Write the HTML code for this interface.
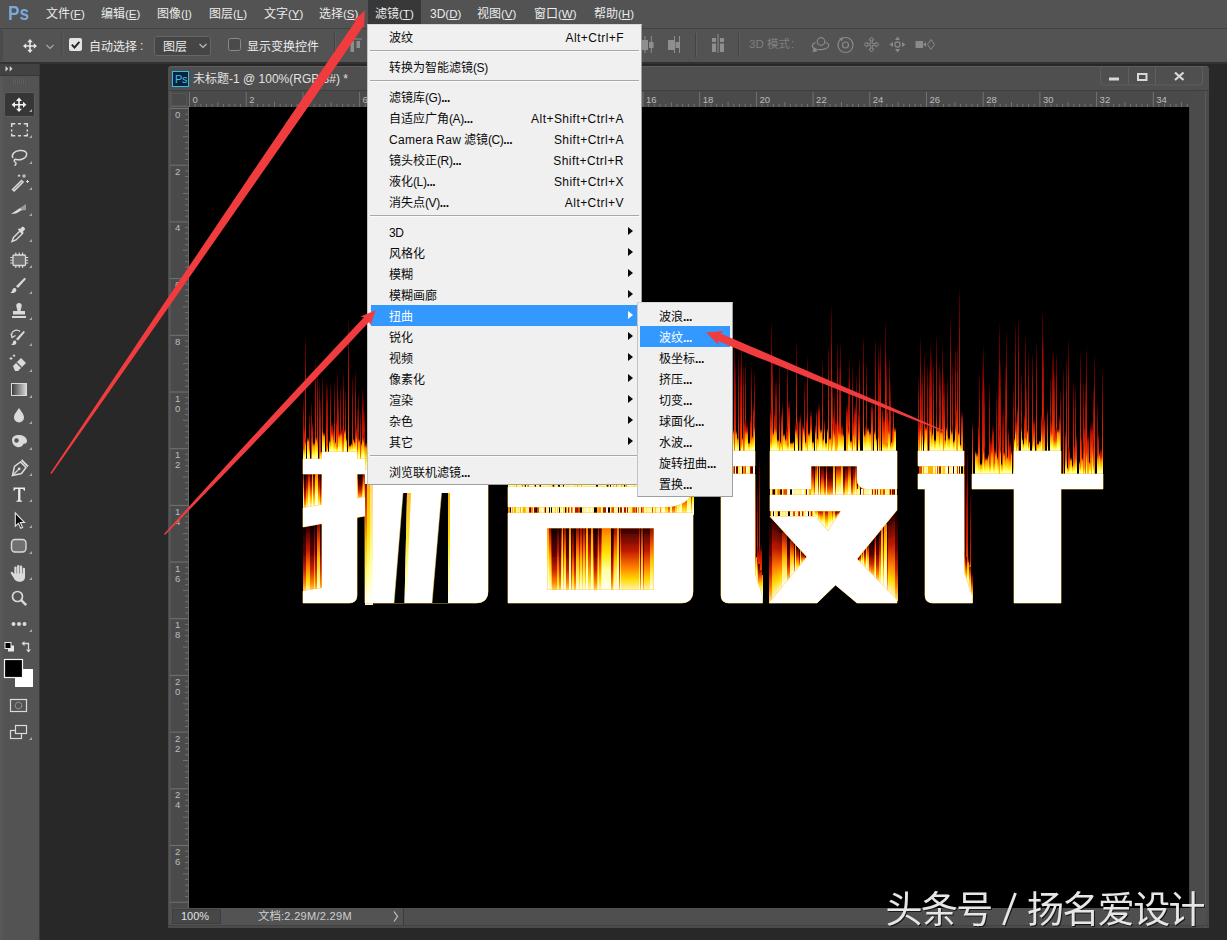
<!DOCTYPE html>
<html lang="zh-CN"><head><meta charset="utf-8"><title>Photoshop - 滤镜 &gt; 扭曲 &gt; 波纹</title>
<style>
html,body{margin:0;padding:0}
body{width:1227px;height:940px;overflow:hidden;position:relative;background:#282828;
 font-family:"Liberation Sans","Noto Sans CJK SC",sans-serif;font-size:12px;color:#ddd}
div{position:absolute;box-sizing:border-box}
.t{white-space:nowrap}
.cj{letter-spacing:0}
svg.abs{position:absolute;left:0;top:0}

.menu{background:#f0f0f0;border:1px solid #a0a0a0;border-top-color:#d8d8d8;border-left-color:#c4c4c4;color:#000;font-size:12px}
.mi{left:0;height:21px;line-height:21px;white-space:nowrap;color:#0a0a0a}
.mi .l{left:20px;top:1.5px;position:absolute}
.mi .la{letter-spacing:-.4px}
.mi .r{right:17px;top:1.5px;position:absolute;letter-spacing:.45px}
.mi.hl{background:#3399ff;color:#fff}
.sep{height:1px;background:#a8a8a8;border-bottom:1px solid #fbfbfb;box-sizing:content-box}
.arr{width:0;height:0;border-left:5.5px solid #0a0a0a;border-top:4px solid transparent;border-bottom:4px solid transparent}
.hl .arr{border-left-color:#fff}
</style></head>
<body>
<div style="left:0px;top:0px;width:1227px;height:28px;background:#535353"></div>
<div style="left:0px;top:28px;width:1227px;height:1px;background:#414141"></div>
<div class="t" style="left:8px;top:0px;font-size:21px;line-height:26px;font-weight:bold;color:#7ba7d9;transform:scaleX(.82);transform-origin:0 0">Ps</div>
<div style="left:368px;top:0px;width:53px;height:24px;background:#383838"></div>
<div class="t mb" style="left:46px;top:6px;font-size:12px;line-height:16px;color:#ebebeb"><span class="cj">文件</span><span style="font-size:11.5px">(<u>F</u>)</span></div>
<div class="t mb" style="left:101px;top:6px;font-size:12px;line-height:16px;color:#ebebeb"><span class="cj">编辑</span><span style="font-size:11.5px">(<u>E</u>)</span></div>
<div class="t mb" style="left:157px;top:6px;font-size:12px;line-height:16px;color:#ebebeb"><span class="cj">图像</span><span style="font-size:11.5px">(<u>I</u>)</span></div>
<div class="t mb" style="left:209px;top:6px;font-size:12px;line-height:16px;color:#ebebeb"><span class="cj">图层</span><span style="font-size:11.5px">(<u>L</u>)</span></div>
<div class="t mb" style="left:264px;top:6px;font-size:12px;line-height:16px;color:#ebebeb"><span class="cj">文字</span><span style="font-size:11.5px">(<u>Y</u>)</span></div>
<div class="t mb" style="left:319px;top:6px;font-size:12px;line-height:16px;color:#ebebeb"><span class="cj">选择</span><span style="font-size:11.5px">(<u>S</u>)</span></div>
<div class="t mb" style="left:375px;top:6px;font-size:12px;line-height:16px;color:#ebebeb"><span class="cj">滤镜</span><span style="font-size:11.5px">(<u>T</u>)</span></div>
<div class="t mb" style="left:430px;top:6px;font-size:12px;line-height:16px;color:#ebebeb">3D<span style="font-size:11.5px">(<u>D</u>)</span></div>
<div class="t mb" style="left:477px;top:6px;font-size:12px;line-height:16px;color:#ebebeb"><span class="cj">视图</span><span style="font-size:11.5px">(<u>V</u>)</span></div>
<div class="t mb" style="left:534px;top:6px;font-size:12px;line-height:16px;color:#ebebeb"><span class="cj">窗口</span><span style="font-size:11.5px">(<u>W</u>)</span></div>
<div class="t mb" style="left:594px;top:6px;font-size:12px;line-height:16px;color:#ebebeb"><span class="cj">帮助</span><span style="font-size:11.5px">(<u>H</u>)</span></div>
<div style="left:0px;top:29px;width:1227px;height:33px;background:#535353"></div>
<div style="left:0px;top:62px;width:1227px;height:2px;background:#323232"></div>
<div style="left:0px;top:30px;width:3px;height:31px;background:#4a4a4a"></div>
<svg class="abs" width="1227" height="64" viewBox="0 0 1227 64"><g fill="#e6e6e6" stroke="none"><path d="M30 39l2.800 3.200h-2v3h3v-2l3.200 2.800-3.200 2.800v-2h-3v3h2l-2.800 3.200-2.800-3.200h2v-3h-3v2l-3.200-2.800 3.200-2.800v2h3v-3h-2z"/></g><path d="M46.5 45l3.500 3.500 3.500-3.500" fill="none" stroke="#a8a8a8" stroke-width="1.2"/><rect x="61.5" y="33" width="1" height="24" fill="#434343"/><rect x="62.5" y="33" width="1" height="24" fill="#5e5e5e"/><rect x="69" y="38" width="13" height="13" rx="2" fill="#e4e4e4"/><path d="M71.8 44.6l2.7 2.9 4.9-5.6" fill="none" stroke="#262626" stroke-width="1.9"/><rect x="154.5" y="36.5" width="56" height="19" rx="2" fill="#454545" stroke="#666" stroke-width="1"/><path d="M199.5 44l3.5 3.500 3.500-3.500" fill="none" stroke="#bdbdbd" stroke-width="1.2"/><rect x="228.5" y="38.5" width="12" height="12" rx="2" fill="#4a4a4a" stroke="#8a8a8a" stroke-width="1"/><rect x="334" y="33" width="1" height="24" fill="#434343"/><rect x="335" y="33" width="1" height="24" fill="#5e5e5e"/><g fill="#8e8e8e"><rect x="350" y="38.500" width="12" height="1"/><rect x="350.500" y="41" width="3.500" height="11"/><rect x="356.500" y="41" width="3.500" height="7"/><rect x="642" y="40" width="6" height="10"/><rect x="644.500" y="36" width="1" height="17"/><rect x="649" y="42" width="4.500" height="6"/><rect x="650.800" y="36" width="1" height="17"/><rect x="668" y="40" width="6" height="10"/><rect x="674" y="36" width="1" height="17"/><rect x="675.500" y="42" width="3.500" height="6"/><rect x="679" y="36" width="1" height="17"/><rect x="712" y="38" width="4" height="4"/><rect x="712" y="43.500" width="4" height="8.500"/><rect x="717.500" y="34" width="1" height="19"/><rect x="720" y="38" width="4" height="4"/><rect x="720" y="43.500" width="4" height="8.500"/></g><rect x="695" y="33" width="1" height="24" fill="#434343"/><rect x="696" y="33" width="1" height="24" fill="#5e5e5e"/><rect x="738" y="33" width="1" height="24" fill="#434343"/><rect x="739" y="33" width="1" height="24" fill="#5e5e5e"/><g fill="none" stroke="#8a8a8a" stroke-width="1.200"><circle cx="821" cy="41.500" r="3.800"/><path d="M815.500 42.500c-4 1.500-4.500 5 0 6.500s11 .5 13-2.500c1-1.800-.5-3.500-3-4"/><path d="M814 47l3.500 4.500-5 .5z" fill="#8a8a8a" stroke="none"/><circle cx="845.500" cy="45" r="7.500"/><circle cx="845.500" cy="45" r="3"/><path d="M839 38.500l4-1-1 4z" fill="#8a8a8a" stroke="none"/><path d="M871.500 37l2.500 3h-1.700v3.700h3.700v-1.700l3 2.500-3 2.500v-1.700h-3.700v3.700h1.700l-2.500 3-2.500-3h1.700v-3.700h-3.700v1.700l-3-2.500 3-2.500v1.700h3.700v-3.700h-1.700z" stroke-width="1"/><circle cx="897.500" cy="44.500" r="2.600"/><path d="M897.500 36.500l2.500 3.500h-5zM897.500 52.500l2.500-3.500h-5zM889.500 44.500l3.500-2.500v5zM905.500 44.500l-3.500-2.500v5z" fill="#8a8a8a" stroke="none"/><rect x="915.500" y="41" width="7.500" height="7" fill="#8a8a8a" stroke="none"/><path d="M923 44.500l3-2.500v5z" fill="#8a8a8a" stroke="none"/><path d="M927.500 44.500l3.500-5 3.500 5-3.500 5z" stroke-width="1"/></g></svg>
<div class="t" style="left:89px;top:38.5px;font-size:12px;line-height:16px;color:#ebebeb;letter-spacing:1.5px"><span class="cj">自动选择</span></div>
<div class="t" style="left:140px;top:38px;font-size:12px;line-height:16px;color:#ebebeb;">:</div>
<div class="t" style="left:163px;top:38.5px;font-size:12px;line-height:16px;color:#ebebeb;"><span class="cj">图层</span></div>
<div class="t" style="left:247px;top:38.5px;font-size:12px;line-height:16px;color:#ebebeb;"><span class="cj">显示变换控件</span></div>
<div class="t" style="left:749px;top:37px;font-size:11.5px;line-height:15.5px;color:#808080;">3D</div>
<div class="t" style="left:767px;top:37px;font-size:11.5px;line-height:15.5px;color:#808080;"><span class="cj">模式</span></div>
<div class="t" style="left:791px;top:36px;font-size:12px;line-height:16px;color:#808080;">:</div>
<div style="left:0px;top:64px;width:39px;height:876px;background:#535353"></div>
<div style="left:39px;top:64px;width:1px;height:876px;background:#3a3a3a"></div>
<div style="left:0px;top:64px;width:3px;height:876px;background:#585858"></div>
<div style="left:0px;top:64px;width:39px;height:11px;background:#424242"></div>
<div style="left:0px;top:75px;width:39px;height:1px;background:#383838"></div>
<div style="left:13px;top:79px;width:14px;height:5px;background:repeating-linear-gradient(90deg,#5f5f5f 0 1px,#4e4e4e 1px 2px)"></div>
<svg class="abs" width="40" height="940" viewBox="0 0 40 940"><rect x="4.500" y="92.500" width="30" height="24" rx="2" fill="#363636" stroke="#5c5c5c"/><path d="M5.500 66l2.800 2.700-2.800 2.700zM9.700 66l2.800 2.700-2.800 2.700z" fill="#d6d6d6"/><path d="M32 112h-3l3-3zM32 138h-3l3-3zM32 164h-3l3-3zM32 190h-3l3-3zM32 216h-3l3-3zM32 242h-3l3-3zM32 268h-3l3-3zM32 294h-3l3-3zM32 320h-3l3-3zM32 346h-3l3-3zM32 372h-3l3-3zM32 398h-3l3-3zM32 424h-3l3-3zM32 450h-3l3-3zM32 476h-3l3-3zM32 502h-3l3-3zM32 528h-3l3-3zM32 554h-3l3-3zM32 580h-3l3-3zM32 632h-3l3-3z" fill="#a9a9a9"/><path d="M19 97.500l3 3.400h-2.200v3.100h3.200v-2.200l3.400 3-3.400 3v-2.200h-3.200v3.100h2.200l-3 3.400-3-3.400h2.200v-3.100h-3.200v2.200l-3.400-3 3.400-3v2.200h3.200v-3.100h-2.200z" fill="#f2f2f2"/><path d="M11.700 127v-3.300h3.600M18 123.700h3M23.700 123.700h3.600v3.300M27.300 129.500v2M27.300 133.500v2.200h-3.600M21 135.700h-3M15.300 135.700h-3.600v-2.200M11.700 131.500v-2" fill="none" stroke="#dadada" stroke-width="1.500"/><path d="M13 158c-2-3 1-7 6.500-7.500s8 2 7 5-6 5-10 4c-2.500-.6-3 1.500-1.500 2.500s1.500 2.500-.5 3.500" fill="none" stroke="#dadada" stroke-width="1.500"/><path d="M11.500 189.500l10-10 2.600 2.600-10 10z" fill="#dadada"/><path d="M14 189.500l8-8" stroke="#535353" stroke-width=".8"/><path d="M24 174v4M22 176h4M27.500 180v3M26 181.500h3M19 174.500v2.500M17.800 175.700h2.500" stroke="#dadada" stroke-width="1"/><path d="M11 214l9-6 3 1.500-7 4z" fill="#dadada"/><path d="M20 208l6-4v6l-3 .5z" fill="#9a9a9a"/><path d="M12 241.500l1.500-4 6.500-6.500 2.500 2.500-6.500 6.500z" fill="none" stroke="#dadada" stroke-width="1.400"/><path d="M20 229l2-2c1.200-1.200 4 1.600 2.800 2.800l-2 2 .8.800-1.400 1.400-4.400-4.400 1.400-1.400z" fill="#dadada"/><rect x="13" y="255" width="12.500" height="10.500" rx="1" fill="#6e6e6e" stroke="#dadada" stroke-width="1.300"/><path d="M10.300 257.500h2.700M10.300 260.300h2.700M10.300 263h2.700M25.500 257.500h2.700M25.500 260.300h2.700M25.500 263h2.700M15.800 252.500v2.500M19.200 252.500v2.500M22.600 252.500v2.500M15.800 265.500v2.500M19.200 265.500v2.500M22.600 265.500v2.500" stroke="#dadada" stroke-width="1.100"/><path d="M26 279l-8 9-2-1.800 8.500-8.500z" fill="#dadada"/><path d="M16 288.500c1 1.500 0 4-2.500 4.500-1.500.3-2.500 0-3-.5 1.500-.5 1.500-1.500 2-3 .5-1.600 2.500-2 3.500-1z" fill="#dadada"/><path d="M16.500 307a2.800 2.800 0 1 1 5 0l-1 4h4.500v3.500h-12v-3.500h4.500z" fill="#dadada"/><rect x="12" y="316" width="14" height="2" fill="#dadada"/><path d="M25 332l-7 8.500-2-1.600 7.500-8z" fill="#dadada"/><path d="M16 341c1 1.500 0 3.500-2 4-1.300.3-2.300 0-2.800-.5 1.300-.4 1.300-1.300 1.800-2.600.5-1.400 2-1.700 3-.9z" fill="#dadada"/><path d="M12 337a5 5 0 0 1 8-5.500M11 333.500l1 4 3.500-2" fill="none" stroke="#dadada" stroke-width="1.200"/><path d="M13 366l8-8 5 5-8 8h-3z" fill="#dadada"/><path d="M16.500 362.500l5 5" stroke="#535353" stroke-width="1.200"/><path d="M11 357v3M9.500 358.500h3M14 354.500v2.500M12.800 355.700h2.500" stroke="#dadada" stroke-width="1"/><defs><linearGradient id="tgr" x1="0" x2="1"><stop offset="0" stop-color="#3a3a3a"/><stop offset="1" stop-color="#d8d8d8"/></linearGradient></defs><rect x="11.500" y="383.500" width="15" height="12" fill="url(#tgr)" stroke="#dadada" stroke-width="1"/><path d="M19 408c3 4.500 5 6.500 5 9.500a5 5 0 0 1-10 0c0-3 2-5 5-9.500z" fill="#dadada"/><path d="M12 440c0-4 4-5.500 8-5 4 .5 7 3 7 6 0 2-1.500 3-3 2.500l-2 2.500c-1 1-3 1.500-5 1-3-.8-5-3.500-5-7z" fill="#dadada"/><circle cx="16.500" cy="440.500" r="2.200" fill="#535353"/><path d="M12.500 475.500l2-9 6-4.500 5.500 5.500-4.500 6-9 2z" fill="none" stroke="#dadada" stroke-width="1.500"/><path d="M13 475l5.500-5.500" stroke="#dadada" stroke-width="1.200"/><circle cx="19.200" cy="468.800" r="1.400" fill="#dadada"/><path d="M21.500 460l6.500 6.500" stroke="#dadada" stroke-width="1.800"/><path d="M13.500 487.500h11.500v3.300h-1c-.2-1.300-.7-1.800-2-1.800h-1.600v10.400c0 .9.400 1.200 1.700 1.300v1h-5.700v-1c1.300-.1 1.700-.4 1.700-1.300v-10.400h-1.600c-1.300 0-1.800.5-2 1.800h-1z" fill="#ececec"/><path d="M15.300 512.800v13.400l3.100-2.900 2.300 5 1.900-.9-2.300-4.900h4.200z" fill="#0c0c0c" stroke="#e4e4e4" stroke-width="1.100"/><rect x="11.500" y="539.500" width="14.500" height="12.500" rx="3.500" fill="#707070" stroke="#dadada" stroke-width="1.400"/><g fill="#dadada"><rect x="14.300" y="566.500" width="2.300" height="9" rx="1.100"/><rect x="17.100" y="565" width="2.300" height="10" rx="1.100"/><rect x="19.900" y="565.600" width="2.300" height="10" rx="1.100"/><rect x="22.700" y="567.800" width="2.300" height="9" rx="1.100"/><path d="M14.300 573.500h10.700v3.500c0 3-2 4.800-5.500 4.800-3 0-4.500-1.300-5.800-3.800l-2.800-4.500c-.8-1.400.9-2.400 1.900-1.200l1.500 1.900z"/></g><circle cx="17.500" cy="596.500" r="5" fill="none" stroke="#dadada" stroke-width="1.700"/><path d="M21.200 600.200l5 5" stroke="#dadada" stroke-width="2.400"/><circle cx="13.500" cy="624" r="2" fill="#dadada"/><circle cx="19" cy="624" r="2" fill="#dadada"/><circle cx="24.500" cy="624" r="2" fill="#dadada"/><rect x="8" y="645.500" width="6" height="6" fill="#e8e8e8"/><rect x="5" y="642.500" width="6" height="6" fill="#000" stroke="#e8e8e8" stroke-width="1"/><path d="M24 643.500h4.500v6" fill="none" stroke="#dadada" stroke-width="1.300"/><path d="M21.500 643.500l3-2.500v5zM28.500 652.500l-2.500-3h5z" fill="#dadada"/><rect x="15.500" y="669.500" width="17" height="17" fill="#fff" stroke="#fff"/><rect x="4.500" y="659.500" width="18" height="18" fill="#000" stroke="#f4f4f4" stroke-width="1.200"/><rect x="10.500" y="699.500" width="16" height="12" fill="none" stroke="#dadada" stroke-width="1.200"/><circle cx="18.500" cy="705.500" r="3.300" fill="none" stroke="#dadada" stroke-width="1" stroke-dasharray="1 1"/><rect x="10.500" y="730.500" width="11" height="8" fill="#535353" stroke="#dadada" stroke-width="1.200"/><rect x="15.500" y="725.500" width="11" height="8" fill="#535353" stroke="#dadada" stroke-width="1.200"/><path d="M32 740h-3l3-3z" fill="#a9a9a9"/></svg>
<div style="left:168px;top:66px;width:1041px;height:862px;background:#4b4b4b;border-radius:4px 4px 0 0"></div>
<div style="left:168px;top:66px;width:1041px;height:24px;background:#4f4f4f;border-radius:4px 4px 0 0;border-top:1px solid #5e5e5e"></div>
<div style="left:168px;top:90px;width:1042px;height:1px;background:#3f3f3f"></div>
<div style="left:172px;top:71px;width:17px;height:16px;background:#06243b;border:1px solid #2fc0ea"></div>
<div class="t" style="left:175px;top:72px;font-size:11px;line-height:14px;color:#4cbdf0;letter-spacing:-0.3px">Ps</div>
<div class="t" style="left:193px;top:71px;font-size:12px;line-height:16px;color:#e2e2e2"><span class="cj">未标题</span>-1 @ 100%(RGB/8#) *</div>
<svg class="abs" width="1227" height="100" viewBox="0 0 1227 100"><rect x="1100.500" y="66.500" width="102" height="18.500" rx="3" fill="none" stroke="#5f5f5f"/><path d="M1128.500 67v18M1155.500 67v18" stroke="#5f5f5f"/><rect x="1109" y="77.500" width="10" height="3" fill="#d8d8d8"/><rect x="1138" y="74" width="8.500" height="6" fill="none" stroke="#d8d8d8" stroke-width="2"/><path d="M1175 72.500l8.500 7.500M1183.500 72.500l-8.500 7.500" stroke="#d8d8d8" stroke-width="2.300"/></svg>
<div style="left:1205px;top:91px;width:1px;height:837px;background:#5a5a5a"></div>
<div style="left:1189px;top:91px;width:1px;height:817px;background:#424242"></div>
<div style="left:169px;top:91px;width:1021px;height:16px;background:#4a4a4a"></div>
<div style="left:169px;top:91px;width:20px;height:817px;background:#4a4a4a"></div>
<div style="left:188px;top:107px;width:1px;height:801px;background:#686868"></div>
<div style="left:169px;top:106px;width:20px;height:1px;background:#626262"></div>
<div style="left:169px;top:91px;width:2px;height:817px;background:#555"></div>
<svg class="abs" width="1227" height="940" viewBox="0 0 1227 940"><rect x="171.500" y="93.500" width="15" height="12" fill="none" stroke="#606060" stroke-dasharray="1 1"/><path d="M189.5 92V107M195.2 104V107M200.8 104V107M206.5 104V107M212.2 104V107M217.8 102V107M223.5 104V107M229.2 104V107M234.9 104V107M240.5 104V107M246.2 92V107M251.9 104V107M257.5 104V107M263.2 104V107M268.9 104V107M274.5 102V107M280.2 104V107M285.9 104V107M291.5 104V107M297.2 104V107M302.9 92V107M308.6 104V107M314.2 104V107M319.9 104V107M325.6 104V107M331.2 102V107M336.9 104V107M342.6 104V107M348.2 104V107M353.9 104V107M359.6 92V107M365.2 104V107M370.9 104V107M376.6 104V107M382.3 104V107M387.9 102V107M393.6 104V107M399.3 104V107M404.9 104V107M410.6 104V107M416.3 92V107M421.9 104V107M427.6 104V107M433.3 104V107M438.9 104V107M444.6 102V107M450.3 104V107M456.0 104V107M461.6 104V107M467.3 104V107M473.0 92V107M478.6 104V107M484.3 104V107M490.0 104V107M495.6 104V107M501.3 102V107M507.0 104V107M512.7 104V107M518.3 104V107M524.0 104V107M529.7 92V107M535.3 104V107M541.0 104V107M546.7 104V107M552.3 104V107M558.0 102V107M563.7 104V107M569.3 104V107M575.0 104V107M580.7 104V107M586.4 92V107M592.0 104V107M597.7 104V107M603.4 104V107M609.0 104V107M614.7 102V107M620.4 104V107M626.0 104V107M631.7 104V107M637.4 104V107M643.0 92V107M648.7 104V107M654.4 104V107M660.1 104V107M665.7 104V107M671.4 102V107M677.1 104V107M682.7 104V107M688.4 104V107M694.1 104V107M699.7 92V107M705.4 104V107M711.1 104V107M716.7 104V107M722.4 104V107M728.1 102V107M733.8 104V107M739.4 104V107M745.1 104V107M750.8 104V107M756.4 92V107M762.1 104V107M767.8 104V107M773.4 104V107M779.1 104V107M784.8 102V107M790.4 104V107M796.1 104V107M801.8 104V107M807.5 104V107M813.1 92V107M818.8 104V107M824.5 104V107M830.1 104V107M835.8 104V107M841.5 102V107M847.1 104V107M852.8 104V107M858.5 104V107M864.1 104V107M869.8 92V107M875.5 104V107M881.2 104V107M886.8 104V107M892.5 104V107M898.2 102V107M903.8 104V107M909.5 104V107M915.2 104V107M920.8 104V107M926.5 92V107M932.2 104V107M937.8 104V107M943.5 104V107M949.2 104V107M954.9 102V107M960.5 104V107M966.2 104V107M971.9 104V107M977.5 104V107M983.2 92V107M988.9 104V107M994.5 104V107M1000.2 104V107M1005.9 104V107M1011.5 102V107M1017.2 104V107M1022.9 104V107M1028.6 104V107M1034.2 104V107M1039.9 92V107M1045.6 104V107M1051.2 104V107M1056.9 104V107M1062.6 104V107M1068.2 102V107M1073.9 104V107M1079.6 104V107M1085.2 104V107M1090.9 104V107M1096.6 92V107M1102.3 104V107M1107.9 104V107M1113.6 104V107M1119.3 104V107M1124.9 102V107M1130.6 104V107M1136.3 104V107M1141.9 104V107M1147.6 104V107M1153.3 92V107M1159.0 104V107M1164.6 104V107M1170.3 104V107M1176.0 104V107M1181.6 102V107M1187.3 104V107M170 108.5H188M185 114.2H188M185 119.8H188M185 125.5H188M185 131.2H188M183 136.8H188M185 142.5H188M185 148.2H188M185 153.9H188M185 159.5H188M170 165.2H188M185 170.9H188M185 176.5H188M185 182.2H188M185 187.9H188M183 193.5H188M185 199.2H188M185 204.9H188M185 210.5H188M185 216.2H188M170 221.9H188M185 227.6H188M185 233.2H188M185 238.9H188M185 244.6H188M183 250.2H188M185 255.9H188M185 261.6H188M185 267.2H188M185 272.9H188M170 278.6H188M185 284.2H188M185 289.9H188M185 295.6H188M185 301.3H188M183 306.9H188M185 312.6H188M185 318.3H188M185 323.9H188M185 329.6H188M170 335.3H188M185 340.9H188M185 346.6H188M185 352.3H188M185 357.9H188M183 363.6H188M185 369.3H188M185 375.0H188M185 380.6H188M185 386.3H188M170 392.0H188M185 397.6H188M185 403.3H188M185 409.0H188M185 414.6H188M183 420.3H188M185 426.0H188M185 431.7H188M185 437.3H188M185 443.0H188M170 448.7H188M185 454.3H188M185 460.0H188M185 465.7H188M185 471.3H188M183 477.0H188M185 482.7H188M185 488.3H188M185 494.0H188M185 499.7H188M170 505.4H188M185 511.0H188M185 516.7H188M185 522.4H188M185 528.0H188M183 533.7H188M185 539.4H188M185 545.0H188M185 550.7H188M185 556.4H188M170 562.0H188M185 567.7H188M185 573.4H188M185 579.1H188M185 584.7H188M183 590.4H188M185 596.1H188M185 601.7H188M185 607.4H188M185 613.1H188M170 618.7H188M185 624.4H188M185 630.1H188M185 635.7H188M185 641.4H188M183 647.1H188M185 652.8H188M185 658.4H188M185 664.1H188M185 669.8H188M170 675.4H188M185 681.1H188M185 686.8H188M185 692.4H188M185 698.1H188M183 703.8H188M185 709.4H188M185 715.1H188M185 720.8H188M185 726.5H188M170 732.1H188M185 737.8H188M185 743.5H188M185 749.1H188M185 754.8H188M183 760.5H188M185 766.1H188M185 771.8H188M185 777.5H188M185 783.1H188M170 788.8H188M185 794.5H188M185 800.2H188M185 805.8H188M185 811.5H188M183 817.2H188M185 822.8H188M185 828.5H188M185 834.2H188M185 839.8H188M170 845.5H188M185 851.2H188M185 856.8H188M185 862.5H188M185 868.2H188M183 873.9H188M185 879.5H188M185 885.2H188M185 890.9H188M185 896.5H188M170 902.2H188" stroke="#727272" stroke-width="1" fill="none"/><g font-family="Liberation Sans, sans-serif" font-size="9.500" fill="#bdbdbd"><text x="192.5" y="103">0</text><text x="249.2" y="103">2</text><text x="305.9" y="103">4</text><text x="362.6" y="103">6</text><text x="419.3" y="103">8</text><text x="476.0" y="103">10</text><text x="532.7" y="103">12</text><text x="589.4" y="103">14</text><text x="646.0" y="103">16</text><text x="702.7" y="103">18</text><text x="759.4" y="103">20</text><text x="816.1" y="103">22</text><text x="872.8" y="103">24</text><text x="929.5" y="103">26</text><text x="986.2" y="103">28</text><text x="1042.9" y="103">30</text><text x="1099.6" y="103">32</text><text x="1156.3" y="103">34</text><text x="175" y="118.0">0</text><text x="175" y="174.7">2</text><text x="175" y="231.4">4</text><text x="175" y="288.1">6</text><text x="175" y="344.8">8</text><text x="175" y="401.5">1</text><text x="175" y="411.5">0</text><text x="175" y="458.2">1</text><text x="175" y="468.2">2</text><text x="175" y="514.9">1</text><text x="175" y="524.9">4</text><text x="175" y="571.5">1</text><text x="175" y="581.5">6</text><text x="175" y="628.2">1</text><text x="175" y="638.2">8</text><text x="175" y="684.9">2</text><text x="175" y="694.9">0</text><text x="175" y="741.6">2</text><text x="175" y="751.6">2</text><text x="175" y="798.3">2</text><text x="175" y="808.3">4</text><text x="175" y="855.0">2</text><text x="175" y="865.0">6</text></g></svg>
<div style="left:169px;top:908px;width:1037px;height:17px;background:#4f4f4f"></div>
<div style="left:169px;top:908px;width:235px;height:17px;background:#535353"></div>
<div style="left:172px;top:909px;width:49px;height:15px;background:#474747;border:1px solid #3e3e3e"></div>
<div style="left:403px;top:908px;width:1px;height:17px;background:#3c3c3c"></div>
<div style="left:168px;top:925px;width:1042px;height:1px;background:#424242"></div>
<div class="t" style="left:181px;top:909px;font-size:11px;line-height:14px;color:#e0e0e0">100%</div>
<div class="t" style="left:258px;top:908px;font-size:11px;line-height:16px;color:#cfcfcf"><span class="cj" style="font-size:11.5px">文档</span><span style="letter-spacing:.3px">:2.29M/2.29M</span></div>
<svg class="abs" width="1227" height="940" viewBox="0 0 1227 940" style="pointer-events:none"><path d="M394 911.500l3.500 5-3.500 5" fill="none" stroke="#c4c4c4" stroke-width="1.200"/></svg>
<div style="left:189px;top:107px;width:1000px;height:801px;background:#000"></div>
<svg class="abs" width="1227" height="940" viewBox="0 0 1227 940" shape-rendering="crispEdges"><defs><clipPath id="cv"><rect x="189" y="107" width="1000" height="801"/></clipPath><filter id="fbl" x="280" y="260" width="850" height="360" filterUnits="userSpaceOnUse"><feGaussianBlur stdDeviation="0.65 0.2"/></filter><linearGradient id="fa" x1="0" y1="1" x2="0" y2="0"><stop offset="0" stop-color="#ffffff"/><stop offset=".25" stop-color="#ffff60"/><stop offset=".5" stop-color="#ffd400"/><stop offset=".78" stop-color="#ff8800"/><stop offset="1" stop-color="#ff4000" stop-opacity="0"/></linearGradient><linearGradient id="fb" x1="0" y1="1" x2="0" y2="0"><stop offset="0" stop-color="#ffc800"/><stop offset=".25" stop-color="#ff7800"/><stop offset=".5" stop-color="#ee3000"/><stop offset=".78" stop-color="#b00c00"/><stop offset="1" stop-color="#600000" stop-opacity="0"/></linearGradient><linearGradient id="fc" x1="0" y1="1" x2="0" y2="0"><stop offset="0" stop-color="#ff8a00"/><stop offset=".1" stop-color="#f04000"/><stop offset=".35" stop-color="#d01800"/><stop offset=".7" stop-color="#900800"/><stop offset=".9" stop-color="#5a0000" stop-opacity=".8"/><stop offset="1" stop-color="#300000" stop-opacity="0"/></linearGradient><linearGradient id="fd" x1="0" y1="1" x2="0" y2="0"><stop offset="0" stop-color="#ffc000"/><stop offset=".1" stop-color="#ff6000"/><stop offset=".3" stop-color="#e02800"/><stop offset=".65" stop-color="#a00a00"/><stop offset=".9" stop-color="#600000" stop-opacity=".8"/><stop offset="1" stop-color="#400000" stop-opacity="0"/></linearGradient><linearGradient id="ga" x1="0" y1="1" x2="0" y2="0"><stop offset="0" stop-color="#fff"/><stop offset=".35" stop-color="#ffffa0"/><stop offset=".6" stop-color="#ffe600"/><stop offset=".85" stop-color="#ffa800"/><stop offset="1" stop-color="#ff7000"/></linearGradient><linearGradient id="gb" x1="0" y1="1" x2="0" y2="0"><stop offset="0" stop-color="#fff"/><stop offset=".28" stop-color="#fff060"/><stop offset=".5" stop-color="#ffc000"/><stop offset=".75" stop-color="#f05000"/><stop offset="1" stop-color="#900c00"/></linearGradient><linearGradient id="gc" x1="0" y1="1" x2="0" y2="0"><stop offset="0" stop-color="#fffad0"/><stop offset=".2" stop-color="#ffd800"/><stop offset=".4" stop-color="#ff7800"/><stop offset=".65" stop-color="#c01800"/><stop offset="1" stop-color="#300000"/></linearGradient><linearGradient id="gd" x1="0" y1="1" x2="0" y2="0"><stop offset="0" stop-color="#ffe870"/><stop offset=".15" stop-color="#ff8000"/><stop offset=".35" stop-color="#c82000"/><stop offset=".6" stop-color="#600000"/><stop offset="1" stop-color="#0a0000"/></linearGradient><linearGradient id="gl" x1="0" y1="1" x2="0" y2="0"><stop offset="0" stop-color="#fff"/><stop offset=".3" stop-color="#ffff80"/><stop offset=".6" stop-color="#ffe000"/><stop offset="1" stop-color="#ffae00"/></linearGradient></defs><g clip-path="url(#cv)"><g filter="url(#fbl)"><rect x="303" y="397" width="1" height="62" fill="url(#fc)"/><rect x="305" y="333" width="1" height="126" fill="url(#fc)"/><rect x="309" y="410" width="1" height="49" fill="url(#fc)"/><rect x="311" y="401" width="1" height="58" fill="url(#fc)"/><rect x="315" y="357" width="1" height="102" fill="url(#fc)"/><rect x="317" y="364" width="1" height="95" fill="url(#fc)"/><rect x="319" y="379" width="1" height="80" fill="url(#fc)"/><rect x="320" y="397" width="1" height="62" fill="url(#fc)"/><rect x="322" y="374" width="1" height="78" fill="url(#fc)"/><rect x="326" y="380" width="1" height="72" fill="url(#fc)"/><rect x="327" y="383" width="1" height="69" fill="url(#fc)"/><rect x="330" y="381" width="1" height="71" fill="url(#fd)"/><rect x="334" y="381" width="1" height="71" fill="url(#fd)"/><rect x="337" y="370" width="1" height="82" fill="url(#fc)"/><rect x="338" y="395" width="1" height="57" fill="url(#fd)"/><rect x="340" y="384" width="1" height="68" fill="url(#fc)"/><rect x="343" y="370" width="1" height="82" fill="url(#fc)"/><rect x="345" y="388" width="1" height="64" fill="url(#fc)"/><rect x="348" y="315" width="1" height="137" fill="url(#fd)"/><rect x="352" y="374" width="1" height="78" fill="url(#fc)"/><rect x="355" y="369" width="1" height="83" fill="url(#fc)"/><rect x="357" y="406" width="1" height="53" fill="url(#fd)"/><rect x="358" y="391" width="1" height="68" fill="url(#fc)"/><rect x="360" y="411" width="1" height="48" fill="url(#fd)"/><rect x="362" y="386" width="1" height="73" fill="url(#fc)"/><rect x="363" y="394" width="1" height="65" fill="url(#fd)"/><rect x="364" y="408" width="1" height="51" fill="url(#fc)"/><rect x="368" y="354" width="1" height="116" fill="url(#fc)"/><rect x="509" y="429" width="1" height="58" fill="url(#fc)"/><rect x="511" y="435" width="1" height="52" fill="url(#fc)"/><rect x="515" y="456" width="1" height="31" fill="url(#fc)"/><rect x="517" y="445" width="1" height="42" fill="url(#fc)"/><rect x="520" y="435" width="1" height="52" fill="url(#fc)"/><rect x="522" y="444" width="1" height="43" fill="url(#fc)"/><rect x="524" y="438" width="1" height="49" fill="url(#fd)"/><rect x="526" y="442" width="1" height="45" fill="url(#fd)"/><rect x="527" y="427" width="1" height="60" fill="url(#fc)"/><rect x="528" y="434" width="1" height="53" fill="url(#fc)"/><rect x="532" y="410" width="1" height="77" fill="url(#fc)"/><rect x="534" y="437" width="1" height="50" fill="url(#fd)"/><rect x="538" y="442" width="1" height="45" fill="url(#fd)"/><rect x="539" y="448" width="1" height="39" fill="url(#fc)"/><rect x="542" y="418" width="1" height="69" fill="url(#fd)"/><rect x="545" y="439" width="1" height="48" fill="url(#fc)"/><rect x="546" y="448" width="1" height="39" fill="url(#fd)"/><rect x="548" y="418" width="1" height="69" fill="url(#fc)"/><rect x="552" y="436" width="1" height="51" fill="url(#fc)"/><rect x="554" y="435" width="1" height="52" fill="url(#fc)"/><rect x="557" y="449" width="1" height="38" fill="url(#fc)"/><rect x="560" y="446" width="1" height="41" fill="url(#fd)"/><rect x="562" y="422" width="1" height="65" fill="url(#fc)"/><rect x="566" y="444" width="1" height="43" fill="url(#fc)"/><rect x="569" y="449" width="1" height="38" fill="url(#fd)"/><rect x="573" y="438" width="1" height="49" fill="url(#fd)"/><rect x="576" y="436" width="1" height="51" fill="url(#fc)"/><rect x="581" y="445" width="1" height="42" fill="url(#fd)"/><rect x="583" y="427" width="1" height="60" fill="url(#fc)"/><rect x="586" y="444" width="1" height="43" fill="url(#fd)"/><rect x="590" y="441" width="1" height="46" fill="url(#fc)"/><rect x="605" y="449" width="1" height="38" fill="url(#fd)"/><rect x="606" y="439" width="1" height="48" fill="url(#fc)"/><rect x="608" y="444" width="1" height="43" fill="url(#fc)"/><rect x="611" y="412" width="1" height="75" fill="url(#fc)"/><rect x="613" y="442" width="1" height="45" fill="url(#fd)"/><rect x="616" y="432" width="1" height="55" fill="url(#fc)"/><rect x="619" y="444" width="1" height="43" fill="url(#fd)"/><rect x="620" y="426" width="1" height="61" fill="url(#fc)"/><rect x="621" y="453" width="1" height="34" fill="url(#fc)"/><rect x="622" y="427" width="1" height="60" fill="url(#fc)"/><rect x="627" y="413" width="1" height="74" fill="url(#fc)"/><rect x="630" y="434" width="1" height="53" fill="url(#fd)"/><rect x="632" y="436" width="1" height="51" fill="url(#fd)"/><rect x="638" y="428" width="1" height="59" fill="url(#fd)"/><rect x="639" y="441" width="1" height="46" fill="url(#fc)"/><rect x="640" y="426" width="1" height="61" fill="url(#fd)"/><rect x="641" y="426" width="1" height="61" fill="url(#fc)"/><rect x="643" y="445" width="1" height="42" fill="url(#fc)"/><rect x="645" y="453" width="1" height="34" fill="url(#fc)"/><rect x="649" y="429" width="1" height="58" fill="url(#fd)"/><rect x="650" y="455" width="1" height="32" fill="url(#fc)"/><rect x="653" y="448" width="1" height="39" fill="url(#fd)"/><rect x="654" y="419" width="1" height="68" fill="url(#fc)"/><rect x="657" y="455" width="1" height="32" fill="url(#fc)"/><rect x="658" y="432" width="1" height="55" fill="url(#fd)"/><rect x="659" y="441" width="1" height="46" fill="url(#fd)"/><rect x="660" y="427" width="1" height="60" fill="url(#fc)"/><rect x="665" y="453" width="1" height="34" fill="url(#fc)"/><rect x="667" y="434" width="1" height="53" fill="url(#fc)"/><rect x="714" y="386" width="1" height="65" fill="url(#fc)"/><rect x="715" y="338" width="1" height="113" fill="url(#fd)"/><rect x="716" y="353" width="1" height="98" fill="url(#fd)"/><rect x="721" y="356" width="1" height="95" fill="url(#fd)"/><rect x="722" y="357" width="1" height="94" fill="url(#fc)"/><rect x="727" y="374" width="1" height="77" fill="url(#fc)"/><rect x="730" y="363" width="1" height="88" fill="url(#fc)"/><rect x="734" y="342" width="1" height="109" fill="url(#fc)"/><rect x="735" y="359" width="1" height="92" fill="url(#fc)"/><rect x="738" y="351" width="1" height="100" fill="url(#fc)"/><rect x="740" y="361" width="1" height="90" fill="url(#fc)"/><rect x="741" y="339" width="1" height="112" fill="url(#fd)"/><rect x="743" y="362" width="1" height="89" fill="url(#fc)"/><rect x="745" y="359" width="1" height="92" fill="url(#fc)"/><rect x="751" y="364" width="1" height="87" fill="url(#fd)"/><rect x="754" y="368" width="1" height="83" fill="url(#fc)"/><rect x="755" y="476" width="1" height="98" fill="url(#fc)"/><rect x="757" y="484" width="1" height="96" fill="url(#fd)"/><rect x="759" y="457" width="1" height="126" fill="url(#fc)"/><rect x="771" y="318" width="1" height="133" fill="url(#fc)"/><rect x="772" y="348" width="1" height="103" fill="url(#fd)"/><rect x="775" y="379" width="1" height="72" fill="url(#fc)"/><rect x="776" y="377" width="1" height="74" fill="url(#fc)"/><rect x="779" y="359" width="1" height="92" fill="url(#fc)"/><rect x="787" y="357" width="1" height="94" fill="url(#fc)"/><rect x="796" y="339" width="1" height="112" fill="url(#fd)"/><rect x="804" y="380" width="1" height="71" fill="url(#fc)"/><rect x="807" y="354" width="1" height="97" fill="url(#fc)"/><rect x="822" y="357" width="1" height="94" fill="url(#fc)"/><rect x="828" y="343" width="1" height="108" fill="url(#fd)"/><rect x="831" y="303" width="1" height="148" fill="url(#fd)"/><rect x="832" y="375" width="1" height="76" fill="url(#fc)"/><rect x="834" y="392" width="1" height="59" fill="url(#fc)"/><rect x="837" y="341" width="1" height="110" fill="url(#fd)"/><rect x="839" y="362" width="1" height="89" fill="url(#fc)"/><rect x="840" y="339" width="1" height="112" fill="url(#fc)"/><rect x="848" y="376" width="1" height="75" fill="url(#fd)"/><rect x="849" y="356" width="1" height="95" fill="url(#fc)"/><rect x="852" y="364" width="1" height="87" fill="url(#fc)"/><rect x="856" y="373" width="1" height="78" fill="url(#fc)"/><rect x="859" y="355" width="1" height="96" fill="url(#fd)"/><rect x="863" y="334" width="1" height="117" fill="url(#fd)"/><rect x="866" y="360" width="1" height="91" fill="url(#fc)"/><rect x="875" y="336" width="1" height="115" fill="url(#fc)"/><rect x="878" y="343" width="1" height="108" fill="url(#fc)"/><rect x="879" y="356" width="1" height="95" fill="url(#fc)"/><rect x="880" y="339" width="1" height="112" fill="url(#fd)"/><rect x="885" y="319" width="1" height="132" fill="url(#fd)"/><rect x="886" y="356" width="1" height="95" fill="url(#fc)"/><rect x="889" y="354" width="1" height="97" fill="url(#fc)"/><rect x="890" y="380" width="1" height="71" fill="url(#fc)"/><rect x="918" y="375" width="1" height="76" fill="url(#fc)"/><rect x="920" y="335" width="1" height="116" fill="url(#fc)"/><rect x="921" y="378" width="1" height="73" fill="url(#fc)"/><rect x="922" y="366" width="1" height="85" fill="url(#fc)"/><rect x="924" y="350" width="1" height="101" fill="url(#fc)"/><rect x="927" y="363" width="1" height="88" fill="url(#fc)"/><rect x="929" y="364" width="1" height="87" fill="url(#fc)"/><rect x="930" y="341" width="1" height="110" fill="url(#fc)"/><rect x="931" y="351" width="1" height="100" fill="url(#fd)"/><rect x="933" y="360" width="1" height="91" fill="url(#fd)"/><rect x="936" y="332" width="1" height="119" fill="url(#fc)"/><rect x="939" y="360" width="1" height="91" fill="url(#fd)"/><rect x="940" y="368" width="1" height="83" fill="url(#fc)"/><rect x="942" y="342" width="1" height="109" fill="url(#fc)"/><rect x="943" y="371" width="1" height="80" fill="url(#fd)"/><rect x="944" y="379" width="1" height="72" fill="url(#fc)"/><rect x="947" y="376" width="1" height="75" fill="url(#fd)"/><rect x="950" y="312" width="1" height="139" fill="url(#fc)"/><rect x="952" y="360" width="1" height="91" fill="url(#fc)"/><rect x="955" y="343" width="1" height="108" fill="url(#fc)"/><rect x="957" y="342" width="1" height="109" fill="url(#fd)"/><rect x="959" y="283" width="1" height="168" fill="url(#fc)"/><rect x="964" y="433" width="1" height="139" fill="url(#fc)"/><rect x="966" y="478" width="1" height="97" fill="url(#fc)"/><rect x="967" y="446" width="1" height="135" fill="url(#fd)"/><rect x="970" y="493" width="1" height="93" fill="url(#fc)"/><rect x="979" y="371" width="1" height="103" fill="url(#fd)"/><rect x="982" y="360" width="1" height="114" fill="url(#fc)"/><rect x="983" y="343" width="1" height="131" fill="url(#fc)"/><rect x="984" y="380" width="1" height="94" fill="url(#fc)"/><rect x="989" y="381" width="1" height="93" fill="url(#fc)"/><rect x="996" y="390" width="1" height="84" fill="url(#fc)"/><rect x="998" y="371" width="1" height="103" fill="url(#fc)"/><rect x="999" y="319" width="1" height="155" fill="url(#fc)"/><rect x="1000" y="356" width="1" height="118" fill="url(#fc)"/><rect x="1002" y="410" width="1" height="64" fill="url(#fd)"/><rect x="1003" y="404" width="1" height="70" fill="url(#fc)"/><rect x="1005" y="359" width="1" height="115" fill="url(#fc)"/><rect x="1006" y="328" width="1" height="146" fill="url(#fd)"/><rect x="1013" y="384" width="1" height="90" fill="url(#fc)"/><rect x="1015" y="320" width="1" height="131" fill="url(#fc)"/><rect x="1018" y="314" width="1" height="137" fill="url(#fc)"/><rect x="1021" y="370" width="1" height="81" fill="url(#fc)"/><rect x="1025" y="332" width="1" height="119" fill="url(#fc)"/><rect x="1026" y="383" width="1" height="68" fill="url(#fc)"/><rect x="1028" y="350" width="1" height="101" fill="url(#fc)"/><rect x="1032" y="351" width="1" height="100" fill="url(#fc)"/><rect x="1036" y="340" width="1" height="111" fill="url(#fc)"/><rect x="1042" y="306" width="1" height="145" fill="url(#fc)"/><rect x="1043" y="336" width="1" height="115" fill="url(#fc)"/><rect x="1050" y="374" width="1" height="77" fill="url(#fd)"/><rect x="1052" y="352" width="1" height="99" fill="url(#fd)"/><rect x="1053" y="347" width="1" height="104" fill="url(#fd)"/><rect x="1054" y="368" width="1" height="83" fill="url(#fc)"/><rect x="1056" y="351" width="1" height="100" fill="url(#fd)"/><rect x="1060" y="388" width="1" height="63" fill="url(#fd)"/><rect x="1063" y="366" width="1" height="108" fill="url(#fc)"/><rect x="1066" y="354" width="1" height="120" fill="url(#fd)"/><rect x="1068" y="335" width="1" height="139" fill="url(#fc)"/><rect x="1073" y="379" width="1" height="95" fill="url(#fd)"/><rect x="1075" y="383" width="1" height="91" fill="url(#fd)"/><rect x="1080" y="349" width="1" height="125" fill="url(#fd)"/><rect x="1083" y="379" width="1" height="95" fill="url(#fd)"/><rect x="1085" y="378" width="1" height="96" fill="url(#fc)"/><rect x="1086" y="343" width="1" height="131" fill="url(#fc)"/><rect x="1093" y="385" width="1" height="89" fill="url(#fd)"/><rect x="1094" y="352" width="1" height="122" fill="url(#fd)"/><rect x="1097" y="400" width="1" height="74" fill="url(#fc)"/><rect x="1102" y="367" width="1" height="107" fill="url(#fd)"/><rect x="304" y="424" width="1" height="35" fill="url(#fb)"/><rect x="305" y="437" width="1" height="22" fill="url(#fb)"/><rect x="309" y="435" width="1" height="24" fill="url(#fb)"/><rect x="312" y="420" width="1" height="39" fill="url(#fb)"/><rect x="331" y="421" width="2" height="31" fill="url(#fb)"/><rect x="333" y="428" width="1" height="24" fill="url(#fb)"/><rect x="334" y="411" width="1" height="41" fill="url(#fb)"/><rect x="336" y="417" width="1" height="35" fill="url(#fb)"/><rect x="339" y="429" width="2" height="23" fill="url(#fb)"/><rect x="341" y="426" width="2" height="26" fill="url(#fb)"/><rect x="343" y="429" width="2" height="23" fill="url(#fb)"/><rect x="355" y="424" width="2" height="28" fill="url(#fb)"/><rect x="358" y="430" width="1" height="29" fill="url(#fb)"/><rect x="363" y="432" width="1" height="27" fill="url(#fb)"/><rect x="364" y="432" width="1" height="27" fill="url(#fb)"/><rect x="367" y="426" width="1" height="44" fill="url(#fb)"/><rect x="508" y="463" width="1" height="24" fill="url(#fb)"/><rect x="510" y="475" width="1" height="12" fill="url(#fb)"/><rect x="512" y="470" width="1" height="17" fill="url(#fb)"/><rect x="513" y="464" width="2" height="23" fill="url(#fb)"/><rect x="515" y="468" width="1" height="19" fill="url(#fb)"/><rect x="516" y="472" width="1" height="15" fill="url(#fb)"/><rect x="519" y="469" width="1" height="18" fill="url(#fb)"/><rect x="526" y="465" width="1" height="22" fill="url(#fb)"/><rect x="527" y="465" width="1" height="22" fill="url(#fb)"/><rect x="529" y="471" width="2" height="16" fill="url(#fb)"/><rect x="537" y="473" width="1" height="14" fill="url(#fb)"/><rect x="541" y="467" width="1" height="20" fill="url(#fb)"/><rect x="544" y="463" width="2" height="24" fill="url(#fb)"/><rect x="548" y="472" width="1" height="15" fill="url(#fb)"/><rect x="554" y="465" width="1" height="22" fill="url(#fb)"/><rect x="556" y="471" width="2" height="16" fill="url(#fb)"/><rect x="557" y="463" width="1" height="24" fill="url(#fb)"/><rect x="571" y="470" width="1" height="17" fill="url(#fb)"/><rect x="573" y="475" width="1" height="12" fill="url(#fb)"/><rect x="574" y="471" width="1" height="16" fill="url(#fb)"/><rect x="576" y="462" width="1" height="25" fill="url(#fb)"/><rect x="577" y="464" width="1" height="23" fill="url(#fb)"/><rect x="580" y="464" width="1" height="23" fill="url(#fb)"/><rect x="581" y="471" width="1" height="16" fill="url(#fb)"/><rect x="584" y="465" width="2" height="22" fill="url(#fb)"/><rect x="586" y="470" width="1" height="17" fill="url(#fb)"/><rect x="587" y="469" width="1" height="18" fill="url(#fb)"/><rect x="590" y="474" width="1" height="13" fill="url(#fb)"/><rect x="595" y="462" width="1" height="25" fill="url(#fb)"/><rect x="599" y="461" width="1" height="26" fill="url(#fb)"/><rect x="600" y="463" width="2" height="24" fill="url(#fb)"/><rect x="606" y="468" width="1" height="19" fill="url(#fb)"/><rect x="613" y="467" width="1" height="20" fill="url(#fb)"/><rect x="614" y="463" width="2" height="24" fill="url(#fb)"/><rect x="620" y="469" width="1" height="18" fill="url(#fb)"/><rect x="621" y="473" width="1" height="14" fill="url(#fb)"/><rect x="625" y="469" width="2" height="18" fill="url(#fb)"/><rect x="626" y="473" width="1" height="14" fill="url(#fb)"/><rect x="627" y="474" width="1" height="13" fill="url(#fb)"/><rect x="628" y="466" width="2" height="21" fill="url(#fb)"/><rect x="637" y="474" width="1" height="13" fill="url(#fb)"/><rect x="639" y="470" width="1" height="17" fill="url(#fb)"/><rect x="640" y="465" width="1" height="22" fill="url(#fb)"/><rect x="650" y="466" width="1" height="21" fill="url(#fb)"/><rect x="652" y="464" width="1" height="23" fill="url(#fb)"/><rect x="653" y="473" width="1" height="14" fill="url(#fb)"/><rect x="664" y="466" width="1" height="21" fill="url(#fb)"/><rect x="715" y="423" width="1" height="28" fill="url(#fb)"/><rect x="721" y="420" width="1" height="31" fill="url(#fb)"/><rect x="722" y="413" width="1" height="38" fill="url(#fb)"/><rect x="724" y="419" width="2" height="32" fill="url(#fb)"/><rect x="729" y="413" width="2" height="38" fill="url(#fb)"/><rect x="730" y="403" width="1" height="48" fill="url(#fb)"/><rect x="744" y="418" width="2" height="33" fill="url(#fb)"/><rect x="746" y="422" width="2" height="29" fill="url(#fb)"/><rect x="750" y="415" width="1" height="36" fill="url(#fb)"/><rect x="753" y="401" width="1" height="50" fill="url(#fb)"/><rect x="754" y="417" width="1" height="34" fill="url(#fb)"/><rect x="757" y="544" width="1" height="36" fill="url(#fb)"/><rect x="758" y="545" width="2" height="38" fill="url(#fb)"/><rect x="760" y="543" width="1" height="46" fill="url(#fb)"/><rect x="761" y="543" width="1" height="49" fill="url(#fb)"/><rect x="770" y="406" width="2" height="45" fill="url(#fb)"/><rect x="774" y="408" width="1" height="43" fill="url(#fb)"/><rect x="779" y="412" width="1" height="39" fill="url(#fb)"/><rect x="781" y="410" width="2" height="41" fill="url(#fb)"/><rect x="782" y="401" width="1" height="50" fill="url(#fb)"/><rect x="786" y="425" width="2" height="26" fill="url(#fb)"/><rect x="788" y="399" width="2" height="52" fill="url(#fb)"/><rect x="795" y="421" width="2" height="30" fill="url(#fb)"/><rect x="797" y="416" width="1" height="35" fill="url(#fb)"/><rect x="799" y="416" width="2" height="35" fill="url(#fb)"/><rect x="800" y="412" width="1" height="39" fill="url(#fb)"/><rect x="802" y="422" width="1" height="29" fill="url(#fb)"/><rect x="803" y="424" width="1" height="27" fill="url(#fb)"/><rect x="806" y="415" width="1" height="36" fill="url(#fb)"/><rect x="807" y="400" width="1" height="51" fill="url(#fb)"/><rect x="810" y="409" width="2" height="42" fill="url(#fb)"/><rect x="815" y="422" width="1" height="29" fill="url(#fb)"/><rect x="816" y="407" width="1" height="44" fill="url(#fb)"/><rect x="818" y="402" width="2" height="49" fill="url(#fb)"/><rect x="824" y="418" width="1" height="33" fill="url(#fb)"/><rect x="832" y="422" width="1" height="29" fill="url(#fb)"/><rect x="833" y="410" width="1" height="41" fill="url(#fb)"/><rect x="834" y="426" width="1" height="25" fill="url(#fb)"/><rect x="835" y="418" width="2" height="33" fill="url(#fb)"/><rect x="838" y="419" width="1" height="32" fill="url(#fb)"/><rect x="841" y="423" width="2" height="28" fill="url(#fb)"/><rect x="846" y="403" width="2" height="48" fill="url(#fb)"/><rect x="848" y="424" width="1" height="27" fill="url(#fb)"/><rect x="849" y="400" width="1" height="51" fill="url(#fb)"/><rect x="853" y="416" width="1" height="35" fill="url(#fb)"/><rect x="854" y="405" width="1" height="46" fill="url(#fb)"/><rect x="855" y="401" width="1" height="50" fill="url(#fb)"/><rect x="858" y="408" width="2" height="43" fill="url(#fb)"/><rect x="865" y="424" width="1" height="27" fill="url(#fb)"/><rect x="866" y="416" width="1" height="35" fill="url(#fb)"/><rect x="871" y="400" width="1" height="51" fill="url(#fb)"/><rect x="872" y="400" width="1" height="51" fill="url(#fb)"/><rect x="882" y="404" width="1" height="47" fill="url(#fb)"/><rect x="883" y="415" width="2" height="36" fill="url(#fb)"/><rect x="886" y="404" width="2" height="47" fill="url(#fb)"/><rect x="888" y="417" width="1" height="34" fill="url(#fb)"/><rect x="892" y="425" width="2" height="26" fill="url(#fb)"/><rect x="893" y="403" width="1" height="48" fill="url(#fb)"/><rect x="918" y="417" width="2" height="34" fill="url(#fb)"/><rect x="925" y="425" width="2" height="26" fill="url(#fb)"/><rect x="936" y="402" width="1" height="49" fill="url(#fb)"/><rect x="939" y="404" width="1" height="47" fill="url(#fb)"/><rect x="940" y="427" width="1" height="24" fill="url(#fb)"/><rect x="944" y="400" width="1" height="51" fill="url(#fb)"/><rect x="947" y="414" width="1" height="37" fill="url(#fb)"/><rect x="952" y="424" width="1" height="27" fill="url(#fb)"/><rect x="955" y="412" width="1" height="39" fill="url(#fb)"/><rect x="956" y="402" width="1" height="49" fill="url(#fb)"/><rect x="961" y="410" width="2" height="41" fill="url(#fb)"/><rect x="968" y="554" width="1" height="29" fill="url(#fb)"/><rect x="972" y="419" width="1" height="55" fill="url(#fb)"/><rect x="978" y="418" width="1" height="56" fill="url(#fb)"/><rect x="979" y="421" width="1" height="53" fill="url(#fb)"/><rect x="984" y="445" width="1" height="29" fill="url(#fb)"/><rect x="990" y="437" width="2" height="37" fill="url(#fb)"/><rect x="992" y="423" width="2" height="51" fill="url(#fb)"/><rect x="994" y="447" width="2" height="27" fill="url(#fb)"/><rect x="998" y="440" width="1" height="34" fill="url(#fb)"/><rect x="999" y="423" width="1" height="51" fill="url(#fb)"/><rect x="1000" y="446" width="1" height="28" fill="url(#fb)"/><rect x="1006" y="417" width="1" height="57" fill="url(#fb)"/><rect x="1008" y="426" width="1" height="48" fill="url(#fb)"/><rect x="1009" y="440" width="2" height="34" fill="url(#fb)"/><rect x="1013" y="437" width="1" height="37" fill="url(#fb)"/><rect x="1015" y="412" width="1" height="39" fill="url(#fb)"/><rect x="1016" y="417" width="1" height="34" fill="url(#fb)"/><rect x="1017" y="404" width="1" height="47" fill="url(#fb)"/><rect x="1021" y="419" width="1" height="32" fill="url(#fb)"/><rect x="1024" y="411" width="1" height="40" fill="url(#fb)"/><rect x="1033" y="418" width="1" height="33" fill="url(#fb)"/><rect x="1034" y="417" width="1" height="34" fill="url(#fb)"/><rect x="1041" y="412" width="1" height="39" fill="url(#fb)"/><rect x="1042" y="416" width="1" height="35" fill="url(#fb)"/><rect x="1043" y="414" width="2" height="37" fill="url(#fb)"/><rect x="1047" y="406" width="1" height="45" fill="url(#fb)"/><rect x="1050" y="411" width="1" height="40" fill="url(#fb)"/><rect x="1051" y="419" width="1" height="32" fill="url(#fb)"/><rect x="1055" y="426" width="2" height="25" fill="url(#fb)"/><rect x="1059" y="414" width="1" height="37" fill="url(#fb)"/><rect x="1060" y="409" width="1" height="42" fill="url(#fb)"/><rect x="1065" y="428" width="1" height="46" fill="url(#fb)"/><rect x="1068" y="445" width="2" height="29" fill="url(#fb)"/><rect x="1074" y="442" width="1" height="32" fill="url(#fb)"/><rect x="1076" y="433" width="1" height="41" fill="url(#fb)"/><rect x="1081" y="433" width="1" height="41" fill="url(#fb)"/><rect x="1083" y="440" width="1" height="34" fill="url(#fb)"/><rect x="1084" y="420" width="1" height="54" fill="url(#fb)"/><rect x="1087" y="432" width="2" height="42" fill="url(#fb)"/><rect x="1090" y="421" width="2" height="53" fill="url(#fb)"/><rect x="1092" y="420" width="1" height="54" fill="url(#fb)"/><rect x="1093" y="437" width="1" height="37" fill="url(#fb)"/><rect x="1098" y="431" width="1" height="43" fill="url(#fb)"/><rect x="1100" y="447" width="2" height="27" fill="url(#fb)"/><rect x="303" y="448" width="2" height="12" fill="url(#fa)"/><rect x="305" y="441" width="1" height="19" fill="url(#fa)"/><rect x="307" y="437" width="2" height="23" fill="url(#fa)"/><rect x="309" y="448" width="1" height="12" fill="url(#fa)"/><rect x="312" y="441" width="1" height="19" fill="url(#fa)"/><rect x="313" y="442" width="2" height="18" fill="url(#fa)"/><rect x="315" y="436" width="2" height="24" fill="url(#fa)"/><rect x="317" y="440" width="1" height="20" fill="url(#fa)"/><rect x="320" y="451" width="2" height="9" fill="url(#fa)"/><rect x="322" y="429" width="1" height="24" fill="url(#fa)"/><rect x="323" y="432" width="2" height="21" fill="url(#fa)"/><rect x="327" y="446" width="1" height="7" fill="url(#fa)"/><rect x="329" y="440" width="2" height="13" fill="url(#fa)"/><rect x="331" y="433" width="2" height="20" fill="url(#fa)"/><rect x="333" y="438" width="1" height="15" fill="url(#fa)"/><rect x="334" y="441" width="2" height="12" fill="url(#fa)"/><rect x="336" y="445" width="1" height="8" fill="url(#fa)"/><rect x="337" y="445" width="1" height="8" fill="url(#fa)"/><rect x="338" y="434" width="2" height="19" fill="url(#fa)"/><rect x="340" y="432" width="2" height="21" fill="url(#fa)"/><rect x="344" y="429" width="2" height="24" fill="url(#fa)"/><rect x="346" y="438" width="1" height="15" fill="url(#fa)"/><rect x="348" y="444" width="1" height="9" fill="url(#fa)"/><rect x="349" y="445" width="2" height="8" fill="url(#fa)"/><rect x="351" y="443" width="1" height="10" fill="url(#fa)"/><rect x="352" y="444" width="1" height="9" fill="url(#fa)"/><rect x="353" y="438" width="1" height="15" fill="url(#fa)"/><rect x="354" y="441" width="2" height="12" fill="url(#fa)"/><rect x="356" y="436" width="1" height="17" fill="url(#fa)"/><rect x="357" y="448" width="1" height="12" fill="url(#fa)"/><rect x="358" y="438" width="2" height="22" fill="url(#fa)"/><rect x="361" y="442" width="1" height="18" fill="url(#fa)"/><rect x="362" y="437" width="1" height="23" fill="url(#fa)"/><rect x="363" y="438" width="1" height="22" fill="url(#fa)"/><rect x="364" y="444" width="1" height="16" fill="url(#fa)"/><rect x="365" y="442" width="2" height="29" fill="url(#fa)"/><rect x="368" y="441" width="1" height="30" fill="url(#fa)"/><rect x="508" y="476" width="1" height="12" fill="url(#fa)"/><rect x="509" y="477" width="1" height="11" fill="url(#fa)"/><rect x="510" y="477" width="1" height="11" fill="url(#fa)"/><rect x="511" y="471" width="1" height="17" fill="url(#fa)"/><rect x="512" y="468" width="1" height="20" fill="url(#fa)"/><rect x="513" y="478" width="2" height="10" fill="url(#fa)"/><rect x="515" y="477" width="1" height="11" fill="url(#fa)"/><rect x="517" y="475" width="1" height="13" fill="url(#fa)"/><rect x="518" y="473" width="2" height="15" fill="url(#fa)"/><rect x="520" y="477" width="2" height="11" fill="url(#fa)"/><rect x="523" y="477" width="1" height="11" fill="url(#fa)"/><rect x="526" y="469" width="1" height="19" fill="url(#fa)"/><rect x="529" y="472" width="2" height="16" fill="url(#fa)"/><rect x="531" y="467" width="2" height="21" fill="url(#fa)"/><rect x="533" y="473" width="1" height="15" fill="url(#fa)"/><rect x="536" y="470" width="2" height="18" fill="url(#fa)"/><rect x="538" y="476" width="1" height="12" fill="url(#fa)"/><rect x="541" y="476" width="2" height="12" fill="url(#fa)"/><rect x="543" y="477" width="1" height="11" fill="url(#fa)"/><rect x="544" y="475" width="2" height="13" fill="url(#fa)"/><rect x="546" y="471" width="2" height="17" fill="url(#fa)"/><rect x="548" y="479" width="1" height="9" fill="url(#fa)"/><rect x="549" y="479" width="2" height="9" fill="url(#fa)"/><rect x="551" y="480" width="1" height="8" fill="url(#fa)"/><rect x="555" y="470" width="2" height="18" fill="url(#fa)"/><rect x="557" y="478" width="1" height="10" fill="url(#fa)"/><rect x="560" y="467" width="2" height="21" fill="url(#fa)"/><rect x="562" y="480" width="1" height="8" fill="url(#fa)"/><rect x="564" y="468" width="1" height="20" fill="url(#fa)"/><rect x="565" y="470" width="2" height="18" fill="url(#fa)"/><rect x="567" y="479" width="2" height="9" fill="url(#fa)"/><rect x="569" y="467" width="2" height="21" fill="url(#fa)"/><rect x="571" y="469" width="1" height="19" fill="url(#fa)"/><rect x="572" y="468" width="2" height="20" fill="url(#fa)"/><rect x="574" y="479" width="1" height="9" fill="url(#fa)"/><rect x="575" y="481" width="1" height="7" fill="url(#fa)"/><rect x="576" y="469" width="1" height="19" fill="url(#fa)"/><rect x="578" y="480" width="1" height="8" fill="url(#fa)"/><rect x="579" y="473" width="2" height="15" fill="url(#fa)"/><rect x="582" y="470" width="1" height="18" fill="url(#fa)"/><rect x="583" y="470" width="2" height="18" fill="url(#fa)"/><rect x="585" y="474" width="2" height="14" fill="url(#fa)"/><rect x="587" y="471" width="1" height="17" fill="url(#fa)"/><rect x="588" y="478" width="2" height="10" fill="url(#fa)"/><rect x="590" y="476" width="1" height="12" fill="url(#fa)"/><rect x="591" y="469" width="2" height="19" fill="url(#fa)"/><rect x="593" y="468" width="2" height="20" fill="url(#fa)"/><rect x="595" y="473" width="1" height="15" fill="url(#fa)"/><rect x="598" y="475" width="1" height="13" fill="url(#fa)"/><rect x="599" y="479" width="1" height="9" fill="url(#fa)"/><rect x="600" y="479" width="2" height="9" fill="url(#fa)"/><rect x="602" y="477" width="2" height="11" fill="url(#fa)"/><rect x="604" y="477" width="2" height="11" fill="url(#fa)"/><rect x="609" y="470" width="1" height="18" fill="url(#fa)"/><rect x="611" y="467" width="2" height="21" fill="url(#fa)"/><rect x="614" y="470" width="2" height="18" fill="url(#fa)"/><rect x="617" y="477" width="2" height="11" fill="url(#fa)"/><rect x="619" y="475" width="1" height="13" fill="url(#fa)"/><rect x="620" y="471" width="1" height="17" fill="url(#fa)"/><rect x="622" y="481" width="2" height="7" fill="url(#fa)"/><rect x="627" y="474" width="1" height="14" fill="url(#fa)"/><rect x="628" y="467" width="2" height="21" fill="url(#fa)"/><rect x="630" y="469" width="1" height="19" fill="url(#fa)"/><rect x="631" y="468" width="2" height="20" fill="url(#fa)"/><rect x="633" y="481" width="2" height="7" fill="url(#fa)"/><rect x="635" y="471" width="1" height="17" fill="url(#fa)"/><rect x="636" y="473" width="1" height="15" fill="url(#fa)"/><rect x="638" y="476" width="1" height="12" fill="url(#fa)"/><rect x="640" y="477" width="1" height="11" fill="url(#fa)"/><rect x="642" y="472" width="2" height="16" fill="url(#fa)"/><rect x="644" y="478" width="2" height="10" fill="url(#fa)"/><rect x="646" y="475" width="2" height="13" fill="url(#fa)"/><rect x="648" y="468" width="1" height="20" fill="url(#fa)"/><rect x="649" y="472" width="1" height="16" fill="url(#fa)"/><rect x="650" y="471" width="1" height="17" fill="url(#fa)"/><rect x="651" y="469" width="2" height="19" fill="url(#fa)"/><rect x="653" y="479" width="1" height="9" fill="url(#fa)"/><rect x="657" y="473" width="1" height="15" fill="url(#fa)"/><rect x="659" y="473" width="1" height="15" fill="url(#fa)"/><rect x="660" y="472" width="1" height="16" fill="url(#fa)"/><rect x="662" y="478" width="2" height="10" fill="url(#fa)"/><rect x="666" y="479" width="1" height="9" fill="url(#fa)"/><rect x="714" y="432" width="1" height="20" fill="url(#fa)"/><rect x="715" y="436" width="1" height="16" fill="url(#fa)"/><rect x="717" y="431" width="2" height="21" fill="url(#fa)"/><rect x="719" y="431" width="2" height="21" fill="url(#fa)"/><rect x="721" y="429" width="1" height="23" fill="url(#fa)"/><rect x="722" y="428" width="1" height="24" fill="url(#fa)"/><rect x="723" y="433" width="2" height="19" fill="url(#fa)"/><rect x="725" y="439" width="2" height="13" fill="url(#fa)"/><rect x="727" y="443" width="1" height="9" fill="url(#fa)"/><rect x="728" y="432" width="2" height="20" fill="url(#fa)"/><rect x="730" y="444" width="1" height="8" fill="url(#fa)"/><rect x="732" y="429" width="2" height="23" fill="url(#fa)"/><rect x="735" y="430" width="2" height="22" fill="url(#fa)"/><rect x="737" y="437" width="2" height="15" fill="url(#fa)"/><rect x="741" y="442" width="1" height="10" fill="url(#fa)"/><rect x="742" y="437" width="1" height="15" fill="url(#fa)"/><rect x="745" y="430" width="1" height="22" fill="url(#fa)"/><rect x="746" y="430" width="2" height="22" fill="url(#fa)"/><rect x="748" y="442" width="2" height="10" fill="url(#fa)"/><rect x="750" y="437" width="2" height="15" fill="url(#fa)"/><rect x="752" y="435" width="2" height="17" fill="url(#fa)"/><rect x="754" y="427" width="1" height="25" fill="url(#fa)"/><rect x="755" y="558" width="2" height="17" fill="url(#fa)"/><rect x="757" y="560" width="1" height="21" fill="url(#fa)"/><rect x="758" y="572" width="2" height="12" fill="url(#fa)"/><rect x="760" y="568" width="1" height="22" fill="url(#fa)"/><rect x="761" y="572" width="1" height="21" fill="url(#fa)"/><rect x="770" y="439" width="2" height="13" fill="url(#fa)"/><rect x="772" y="431" width="2" height="21" fill="url(#fa)"/><rect x="774" y="427" width="2" height="25" fill="url(#fa)"/><rect x="776" y="429" width="1" height="23" fill="url(#fa)"/><rect x="777" y="439" width="2" height="13" fill="url(#fa)"/><rect x="780" y="441" width="2" height="11" fill="url(#fa)"/><rect x="783" y="433" width="2" height="19" fill="url(#fa)"/><rect x="785" y="438" width="2" height="14" fill="url(#fa)"/><rect x="787" y="443" width="2" height="9" fill="url(#fa)"/><rect x="789" y="429" width="1" height="23" fill="url(#fa)"/><rect x="790" y="442" width="1" height="10" fill="url(#fa)"/><rect x="791" y="442" width="2" height="10" fill="url(#fa)"/><rect x="793" y="441" width="1" height="11" fill="url(#fa)"/><rect x="795" y="429" width="2" height="23" fill="url(#fa)"/><rect x="797" y="435" width="1" height="17" fill="url(#fa)"/><rect x="803" y="427" width="1" height="25" fill="url(#fa)"/><rect x="804" y="431" width="1" height="21" fill="url(#fa)"/><rect x="805" y="441" width="2" height="11" fill="url(#fa)"/><rect x="808" y="432" width="2" height="20" fill="url(#fa)"/><rect x="810" y="427" width="2" height="25" fill="url(#fa)"/><rect x="812" y="441" width="2" height="11" fill="url(#fa)"/><rect x="815" y="430" width="1" height="22" fill="url(#fa)"/><rect x="817" y="437" width="2" height="15" fill="url(#fa)"/><rect x="819" y="426" width="1" height="26" fill="url(#fa)"/><rect x="820" y="428" width="2" height="24" fill="url(#fa)"/><rect x="822" y="438" width="2" height="14" fill="url(#fa)"/><rect x="824" y="428" width="1" height="24" fill="url(#fa)"/><rect x="825" y="442" width="2" height="10" fill="url(#fa)"/><rect x="827" y="428" width="1" height="24" fill="url(#fa)"/><rect x="829" y="437" width="2" height="15" fill="url(#fa)"/><rect x="832" y="441" width="1" height="11" fill="url(#fa)"/><rect x="833" y="429" width="1" height="23" fill="url(#fa)"/><rect x="834" y="433" width="1" height="19" fill="url(#fa)"/><rect x="837" y="443" width="1" height="9" fill="url(#fa)"/><rect x="838" y="431" width="2" height="21" fill="url(#fa)"/><rect x="840" y="432" width="2" height="20" fill="url(#fa)"/><rect x="842" y="433" width="2" height="19" fill="url(#fa)"/><rect x="848" y="430" width="1" height="22" fill="url(#fa)"/><rect x="849" y="431" width="1" height="21" fill="url(#fa)"/><rect x="850" y="440" width="2" height="12" fill="url(#fa)"/><rect x="853" y="433" width="1" height="19" fill="url(#fa)"/><rect x="854" y="441" width="1" height="11" fill="url(#fa)"/><rect x="855" y="433" width="1" height="19" fill="url(#fa)"/><rect x="858" y="437" width="2" height="15" fill="url(#fa)"/><rect x="863" y="427" width="1" height="25" fill="url(#fa)"/><rect x="864" y="433" width="2" height="19" fill="url(#fa)"/><rect x="866" y="430" width="1" height="22" fill="url(#fa)"/><rect x="867" y="427" width="2" height="25" fill="url(#fa)"/><rect x="869" y="431" width="2" height="21" fill="url(#fa)"/><rect x="874" y="430" width="2" height="22" fill="url(#fa)"/><rect x="876" y="438" width="1" height="14" fill="url(#fa)"/><rect x="878" y="436" width="1" height="16" fill="url(#fa)"/><rect x="882" y="438" width="1" height="14" fill="url(#fa)"/><rect x="883" y="442" width="2" height="10" fill="url(#fa)"/><rect x="885" y="442" width="1" height="10" fill="url(#fa)"/><rect x="886" y="443" width="2" height="9" fill="url(#fa)"/><rect x="888" y="430" width="2" height="22" fill="url(#fa)"/><rect x="890" y="444" width="1" height="8" fill="url(#fa)"/><rect x="891" y="441" width="2" height="11" fill="url(#fa)"/><rect x="893" y="437" width="1" height="15" fill="url(#fa)"/><rect x="894" y="427" width="2" height="25" fill="url(#fa)"/><rect x="920" y="428" width="1" height="24" fill="url(#fa)"/><rect x="922" y="433" width="1" height="19" fill="url(#fa)"/><rect x="924" y="438" width="1" height="14" fill="url(#fa)"/><rect x="925" y="426" width="2" height="26" fill="url(#fa)"/><rect x="930" y="427" width="1" height="25" fill="url(#fa)"/><rect x="931" y="434" width="1" height="18" fill="url(#fa)"/><rect x="932" y="432" width="1" height="20" fill="url(#fa)"/><rect x="933" y="427" width="1" height="25" fill="url(#fa)"/><rect x="934" y="439" width="2" height="13" fill="url(#fa)"/><rect x="936" y="427" width="1" height="25" fill="url(#fa)"/><rect x="937" y="427" width="2" height="25" fill="url(#fa)"/><rect x="939" y="438" width="1" height="14" fill="url(#fa)"/><rect x="940" y="429" width="2" height="23" fill="url(#fa)"/><rect x="942" y="430" width="1" height="22" fill="url(#fa)"/><rect x="944" y="437" width="1" height="15" fill="url(#fa)"/><rect x="945" y="439" width="1" height="13" fill="url(#fa)"/><rect x="946" y="426" width="1" height="26" fill="url(#fa)"/><rect x="947" y="433" width="1" height="19" fill="url(#fa)"/><rect x="948" y="437" width="2" height="15" fill="url(#fa)"/><rect x="950" y="426" width="1" height="26" fill="url(#fa)"/><rect x="951" y="430" width="2" height="22" fill="url(#fa)"/><rect x="953" y="441" width="1" height="11" fill="url(#fa)"/><rect x="954" y="439" width="1" height="13" fill="url(#fa)"/><rect x="955" y="427" width="1" height="25" fill="url(#fa)"/><rect x="958" y="431" width="2" height="21" fill="url(#fa)"/><rect x="960" y="444" width="2" height="8" fill="url(#fa)"/><rect x="964" y="564" width="1" height="9" fill="url(#fa)"/><rect x="965" y="567" width="2" height="9" fill="url(#fa)"/><rect x="967" y="565" width="1" height="17" fill="url(#fa)"/><rect x="968" y="565" width="1" height="20" fill="url(#fa)"/><rect x="969" y="562" width="2" height="25" fill="url(#fa)"/><rect x="971" y="584" width="2" height="9" fill="url(#fa)"/><rect x="975" y="450" width="1" height="25" fill="url(#fa)"/><rect x="976" y="452" width="2" height="23" fill="url(#fa)"/><rect x="978" y="459" width="1" height="16" fill="url(#fa)"/><rect x="979" y="459" width="1" height="16" fill="url(#fa)"/><rect x="980" y="463" width="2" height="12" fill="url(#fa)"/><rect x="982" y="458" width="1" height="17" fill="url(#fa)"/><rect x="983" y="449" width="1" height="26" fill="url(#fa)"/><rect x="984" y="461" width="1" height="14" fill="url(#fa)"/><rect x="985" y="457" width="1" height="18" fill="url(#fa)"/><rect x="986" y="457" width="2" height="18" fill="url(#fa)"/><rect x="988" y="453" width="1" height="22" fill="url(#fa)"/><rect x="989" y="463" width="2" height="12" fill="url(#fa)"/><rect x="991" y="450" width="2" height="25" fill="url(#fa)"/><rect x="993" y="462" width="2" height="13" fill="url(#fa)"/><rect x="995" y="451" width="1" height="24" fill="url(#fa)"/><rect x="996" y="451" width="1" height="24" fill="url(#fa)"/><rect x="997" y="456" width="1" height="19" fill="url(#fa)"/><rect x="998" y="461" width="1" height="14" fill="url(#fa)"/><rect x="1000" y="448" width="1" height="27" fill="url(#fa)"/><rect x="1001" y="463" width="2" height="12" fill="url(#fa)"/><rect x="1003" y="451" width="2" height="24" fill="url(#fa)"/><rect x="1005" y="457" width="1" height="18" fill="url(#fa)"/><rect x="1006" y="455" width="2" height="20" fill="url(#fa)"/><rect x="1008" y="456" width="1" height="19" fill="url(#fa)"/><rect x="1009" y="458" width="2" height="17" fill="url(#fa)"/><rect x="1011" y="450" width="1" height="25" fill="url(#fa)"/><rect x="1013" y="465" width="1" height="10" fill="url(#fa)"/><rect x="1014" y="438" width="1" height="14" fill="url(#fa)"/><rect x="1015" y="429" width="1" height="23" fill="url(#fa)"/><rect x="1017" y="443" width="1" height="9" fill="url(#fa)"/><rect x="1021" y="428" width="1" height="24" fill="url(#fa)"/><rect x="1022" y="438" width="1" height="14" fill="url(#fa)"/><rect x="1023" y="443" width="1" height="9" fill="url(#fa)"/><rect x="1024" y="436" width="2" height="16" fill="url(#fa)"/><rect x="1026" y="438" width="1" height="14" fill="url(#fa)"/><rect x="1027" y="429" width="1" height="23" fill="url(#fa)"/><rect x="1028" y="444" width="1" height="8" fill="url(#fa)"/><rect x="1029" y="441" width="1" height="11" fill="url(#fa)"/><rect x="1032" y="444" width="1" height="8" fill="url(#fa)"/><rect x="1033" y="438" width="1" height="14" fill="url(#fa)"/><rect x="1034" y="443" width="1" height="9" fill="url(#fa)"/><rect x="1037" y="443" width="2" height="9" fill="url(#fa)"/><rect x="1039" y="440" width="2" height="12" fill="url(#fa)"/><rect x="1041" y="432" width="1" height="20" fill="url(#fa)"/><rect x="1047" y="439" width="1" height="13" fill="url(#fa)"/><rect x="1050" y="432" width="1" height="20" fill="url(#fa)"/><rect x="1051" y="432" width="1" height="20" fill="url(#fa)"/><rect x="1052" y="432" width="1" height="20" fill="url(#fa)"/><rect x="1053" y="438" width="1" height="14" fill="url(#fa)"/><rect x="1054" y="440" width="2" height="12" fill="url(#fa)"/><rect x="1056" y="439" width="1" height="13" fill="url(#fa)"/><rect x="1057" y="428" width="2" height="24" fill="url(#fa)"/><rect x="1059" y="429" width="1" height="23" fill="url(#fa)"/><rect x="1065" y="458" width="2" height="17" fill="url(#fa)"/><rect x="1067" y="467" width="2" height="8" fill="url(#fa)"/><rect x="1069" y="463" width="1" height="12" fill="url(#fa)"/><rect x="1070" y="457" width="2" height="18" fill="url(#fa)"/><rect x="1072" y="465" width="1" height="10" fill="url(#fa)"/><rect x="1073" y="461" width="2" height="14" fill="url(#fa)"/><rect x="1075" y="457" width="2" height="18" fill="url(#fa)"/><rect x="1079" y="461" width="1" height="14" fill="url(#fa)"/><rect x="1080" y="464" width="1" height="11" fill="url(#fa)"/><rect x="1081" y="457" width="2" height="18" fill="url(#fa)"/><rect x="1084" y="465" width="1" height="10" fill="url(#fa)"/><rect x="1086" y="452" width="1" height="23" fill="url(#fa)"/><rect x="1089" y="461" width="2" height="14" fill="url(#fa)"/><rect x="1092" y="450" width="1" height="25" fill="url(#fa)"/><rect x="1093" y="463" width="1" height="12" fill="url(#fa)"/><rect x="1097" y="455" width="1" height="20" fill="url(#fa)"/><rect x="1098" y="455" width="1" height="20" fill="url(#fa)"/><rect x="1099" y="452" width="1" height="23" fill="url(#fa)"/><rect x="1100" y="457" width="2" height="18" fill="url(#fa)"/><rect x="1102" y="454" width="1" height="21" fill="url(#fa)"/></g><g filter="url(#fbl)"><rect x="303" y="474.0" width="1" height="34.9" fill="url(#gb)"/><rect x="304" y="474.0" width="1" height="34.800" fill="url(#gd)"/><rect x="305" y="474.0" width="1" height="34.6" fill="url(#gd)"/><rect x="306" y="474.0" width="2" height="34.4" fill="url(#gc)"/><rect x="308" y="474.0" width="2" height="34.0" fill="url(#gb)"/><rect x="310" y="474.0" width="2" height="33.7" fill="url(#gc)"/><rect x="312" y="474.0" width="1" height="33.5" fill="url(#ga)"/><rect x="313" y="474.0" width="2" height="33.2" fill="url(#gc)"/><rect x="315" y="474.0" width="3" height="32.8" fill="url(#ga)"/><rect x="318" y="474.0" width="2" height="32.4" fill="url(#gc)"/><rect x="320" y="474.0" width="1" height="32.2" fill="url(#gd)"/><rect x="321" y="474.0" width="1" height="32.0" fill="url(#gc)"/><rect x="357" y="474.0" width="1" height="25.0" fill="url(#gb)"/><rect x="358" y="474.0" width="2" height="25.0" fill="url(#gd)"/><rect x="360" y="474.0" width="1" height="25.0" fill="url(#gd)"/><rect x="361" y="474.0" width="1" height="25.0" fill="url(#gd)"/><rect x="362" y="474.0" width="1" height="25.0" fill="url(#gc)"/><rect x="363" y="474.0" width="1" height="25.0" fill="url(#gb)"/><rect x="364" y="474.0" width="1" height="25.0" fill="url(#gc)"/><rect x="303" y="526.8" width="3" height="66.2" fill="url(#gd)"/><rect x="306" y="526.4" width="1" height="66.6" fill="url(#gc)"/><rect x="307" y="526.1" width="3" height="66.9" fill="url(#gc)"/><rect x="310" y="525.8" width="1" height="67.2" fill="url(#gd)"/><rect x="311" y="525.6" width="2" height="67.4" fill="url(#gd)"/><rect x="313" y="525.3" width="1" height="67.7" fill="url(#gd)"/><rect x="314" y="525.2" width="1" height="67.8" fill="url(#gc)"/><rect x="315" y="525.0" width="1" height="68.0" fill="url(#gd)"/><rect x="316" y="524.8" width="1" height="68.2" fill="url(#gd)"/><rect x="317" y="524.5" width="3" height="68.5" fill="url(#gb)"/><rect x="320" y="524.1" width="2" height="68.9" fill="url(#gd)"/><rect x="365" y="484.0" width="2" height="121.0" fill="url(#gb)"/><rect x="367" y="484.0" width="2" height="121.0" fill="url(#gc)"/><rect x="369" y="484.0" width="1" height="121.0" fill="url(#gb)"/><rect x="370" y="484.0" width="1" height="121.0" fill="url(#gb)"/><rect x="371" y="484.0" width="1" height="121.0" fill="url(#gc)"/><rect x="372" y="484.0" width="1" height="121.0" fill="url(#gc)"/><rect x="508" y="507" width="160" height="6" fill="#fff6a0"/><rect x="508" y="507" width="2" height="6" fill="#ff8a00"/><rect x="510" y="507" width="1" height="6" fill="#1c0000"/><rect x="512" y="507" width="1" height="6" fill="#ffb000"/><rect x="514" y="507" width="2" height="6" fill="#ffb000"/><rect x="518" y="507" width="1" height="6" fill="#ffee50"/><rect x="520" y="507" width="1" height="6" fill="#ffb000"/><rect x="521" y="507" width="1" height="6" fill="#ffffff"/><rect x="522" y="507" width="1" height="6" fill="#ffee50"/><rect x="523" y="507" width="2" height="6" fill="#ffb000"/><rect x="525" y="507" width="1" height="6" fill="#ffd200"/><rect x="529" y="507" width="1" height="6" fill="#b01800"/><rect x="530" y="507" width="1" height="6" fill="#6a0400"/><rect x="531" y="507" width="2" height="6" fill="#ff8a00"/><rect x="534" y="507" width="2" height="6" fill="#6a0400"/><rect x="536" y="507" width="1" height="6" fill="#000"/><rect x="537" y="507" width="2" height="6" fill="#e04800"/><rect x="542" y="507" width="1" height="6" fill="#ffffff"/><rect x="544" y="507" width="1" height="6" fill="#ffb000"/><rect x="545" y="507" width="1" height="6" fill="#6a0400"/><rect x="549" y="507" width="1" height="6" fill="#000"/><rect x="551" y="507" width="1" height="6" fill="#000"/><rect x="555" y="507" width="1" height="6" fill="#ffd200"/><rect x="556" y="507" width="1" height="6" fill="#ffffff"/><rect x="557" y="507" width="1" height="6" fill="#ffd200"/><rect x="559" y="507" width="1" height="6" fill="#1c0000"/><rect x="562" y="507" width="1" height="6" fill="#ffffff"/><rect x="563" y="507" width="1" height="6" fill="#ffd200"/><rect x="564" y="507" width="1" height="6" fill="#ffee50"/><rect x="565" y="507" width="1" height="6" fill="#1c0000"/><rect x="566" y="507" width="1" height="6" fill="#ff8a00"/><rect x="568" y="507" width="1" height="6" fill="#b01800"/><rect x="569" y="507" width="1" height="6" fill="#ffb000"/><rect x="570" y="507" width="1" height="6" fill="#ffffff"/><rect x="571" y="507" width="1" height="6" fill="#e04800"/><rect x="572" y="507" width="1" height="6" fill="#ffb000"/><rect x="573" y="507" width="1" height="6" fill="#ffffff"/><rect x="575" y="507" width="2" height="6" fill="#b01800"/><rect x="577" y="507" width="1" height="6" fill="#b01800"/><rect x="578" y="507" width="2" height="6" fill="#e04800"/><rect x="580" y="507" width="2" height="6" fill="#000"/><rect x="583" y="507" width="1" height="6" fill="#ffee50"/><rect x="587" y="507" width="1" height="6" fill="#ffffff"/><rect x="591" y="507" width="1" height="6" fill="#ffffff"/><rect x="594" y="507" width="1" height="6" fill="#000"/><rect x="595" y="507" width="2" height="6" fill="#1c0000"/><rect x="597" y="507" width="2" height="6" fill="#ffb000"/><rect x="599" y="507" width="2" height="6" fill="#ff8a00"/><rect x="602" y="507" width="1" height="6" fill="#ffee50"/><rect x="603" y="507" width="2" height="6" fill="#b01800"/><rect x="605" y="507" width="1" height="6" fill="#b01800"/><rect x="606" y="507" width="2" height="6" fill="#ffffff"/><rect x="608" y="507" width="2" height="6" fill="#000"/><rect x="611" y="507" width="1" height="6" fill="#ff8a00"/><rect x="612" y="507" width="2" height="6" fill="#e04800"/><rect x="618" y="507" width="1" height="6" fill="#1c0000"/><rect x="619" y="507" width="1" height="6" fill="#ffee50"/><rect x="620" y="507" width="2" height="6" fill="#b01800"/><rect x="622" y="507" width="1" height="6" fill="#ffffff"/><rect x="624" y="507" width="2" height="6" fill="#b01800"/><rect x="627" y="507" width="1" height="6" fill="#b01800"/><rect x="630" y="507" width="2" height="6" fill="#ffee50"/><rect x="632" y="507" width="1" height="6" fill="#ff8a00"/><rect x="633" y="507" width="2" height="6" fill="#e04800"/><rect x="635" y="507" width="1" height="6" fill="#ff8a00"/><rect x="636" y="507" width="1" height="6" fill="#b01800"/><rect x="637" y="507" width="1" height="6" fill="#ffffff"/><rect x="638" y="507" width="1" height="6" fill="#ff8a00"/><rect x="641" y="507" width="1" height="6" fill="#b01800"/><rect x="642" y="507" width="1" height="6" fill="#ff8a00"/><rect x="643" y="507" width="1" height="6" fill="#ff8a00"/><rect x="646" y="507" width="1" height="6" fill="#ffee50"/><rect x="652" y="507" width="1" height="6" fill="#e04800"/><rect x="655" y="507" width="1" height="6" fill="#ffd200"/><rect x="659" y="507" width="1" height="6" fill="#ffffff"/><rect x="660" y="507" width="1" height="6" fill="#ff8a00"/><rect x="662" y="507" width="2" height="6" fill="#ffffff"/><rect x="664" y="507" width="1" height="6" fill="#000"/><rect x="667" y="507" width="1" height="6" fill="#000"/><rect x="662" y="486.0" width="1" height="29.0" fill="url(#ga)"/><rect x="663" y="486.0" width="2" height="29.0" fill="url(#ga)"/><rect x="665" y="486.0" width="1" height="29.0" fill="url(#gc)"/><rect x="666" y="486.0" width="2" height="29.0" fill="url(#gc)"/><rect x="668" y="486.0" width="2" height="29.0" fill="url(#gd)"/><rect x="670" y="486.0" width="1" height="29.0" fill="url(#gb)"/><rect x="671" y="486.0" width="1" height="29.0" fill="url(#gb)"/><rect x="672" y="486.0" width="3" height="29.0" fill="url(#gd)"/><rect x="675" y="486.0" width="2" height="29.0" fill="url(#gc)"/><rect x="677" y="486.0" width="1" height="29.0" fill="url(#gb)"/><rect x="678" y="486.0" width="2" height="29.0" fill="url(#gb)"/><rect x="680" y="486.0" width="1" height="29.0" fill="url(#ga)"/><rect x="681" y="486.0" width="1" height="29.0" fill="url(#ga)"/><rect x="682" y="486.0" width="2" height="29.0" fill="url(#gc)"/><rect x="684" y="486.0" width="3" height="29.0" fill="url(#gc)"/><rect x="687" y="486.0" width="1" height="29.0" fill="url(#ga)"/><rect x="688" y="486.0" width="3" height="29.0" fill="url(#ga)"/><rect x="691" y="486.0" width="1" height="29.0" fill="url(#gc)"/><rect x="692" y="486.0" width="2" height="29.0" fill="url(#ga)"/><rect x="547" y="528.0" width="2" height="64.0" fill="url(#ga)"/><rect x="549" y="528.0" width="2" height="64.0" fill="url(#gb)"/><rect x="551" y="528.0" width="1" height="64.0" fill="url(#gc)"/><rect x="552" y="528.0" width="2" height="64.0" fill="url(#gd)"/><rect x="554" y="528.0" width="3" height="64.0" fill="url(#gd)"/><rect x="557" y="528.0" width="2" height="64.0" fill="url(#gc)"/><rect x="559" y="528.0" width="1" height="64.0" fill="url(#gd)"/><rect x="560" y="528.0" width="1" height="64.0" fill="url(#gd)"/><rect x="561" y="528.0" width="1" height="64.0" fill="url(#gb)"/><rect x="562" y="528.0" width="1" height="64.0" fill="url(#ga)"/><rect x="563" y="528.0" width="1" height="64.0" fill="url(#gc)"/><rect x="564" y="528.0" width="2" height="64.0" fill="url(#gb)"/><rect x="566" y="528.0" width="3" height="64.0" fill="url(#gd)"/><rect x="569" y="528.0" width="2" height="64.0" fill="url(#ga)"/><rect x="571" y="528.0" width="1" height="64.0" fill="url(#gd)"/><rect x="572" y="528.0" width="2" height="64.0" fill="url(#gc)"/><rect x="574" y="528.0" width="2" height="64.0" fill="url(#gd)"/><rect x="576" y="528.0" width="3" height="64.0" fill="url(#gb)"/><rect x="579" y="528.0" width="1" height="64.0" fill="url(#gc)"/><rect x="580" y="528.0" width="2" height="64.0" fill="url(#gb)"/><rect x="582" y="528.0" width="1" height="64.0" fill="url(#gc)"/><rect x="583" y="528.0" width="2" height="64.0" fill="url(#gb)"/><rect x="585" y="528.0" width="1" height="64.0" fill="url(#gc)"/><rect x="586" y="528.0" width="2" height="64.0" fill="url(#ga)"/><rect x="588" y="528.0" width="3" height="64.0" fill="url(#gc)"/><rect x="591" y="528.0" width="2" height="64.0" fill="url(#ga)"/><rect x="593" y="528.0" width="1" height="64.0" fill="url(#gc)"/><rect x="594" y="528.0" width="2" height="64.0" fill="url(#gd)"/><rect x="596" y="528.0" width="1" height="64.0" fill="url(#gd)"/><rect x="597" y="528.0" width="1" height="64.0" fill="url(#gc)"/><rect x="598" y="528.0" width="1" height="64.0" fill="url(#gb)"/><rect x="599" y="528.0" width="1" height="64.0" fill="url(#gc)"/><rect x="600" y="528.0" width="1" height="64.0" fill="url(#gc)"/><rect x="601" y="528.0" width="1" height="64.0" fill="url(#gb)"/><rect x="602" y="528.0" width="3" height="64.0" fill="url(#ga)"/><rect x="605" y="528.0" width="3" height="64.0" fill="url(#ga)"/><rect x="608" y="528.0" width="3" height="64.0" fill="url(#ga)"/><rect x="611" y="528.0" width="2" height="64.0" fill="url(#gd)"/><rect x="613" y="528.0" width="1" height="64.0" fill="url(#gc)"/><rect x="614" y="528.0" width="3" height="64.0" fill="url(#gb)"/><rect x="617" y="528.0" width="2" height="64.0" fill="url(#ga)"/><rect x="619" y="528.0" width="1" height="64.0" fill="url(#gd)"/><rect x="620" y="528.0" width="1" height="64.0" fill="url(#gb)"/><rect x="621" y="528.0" width="3" height="64.0" fill="url(#gc)"/><rect x="624" y="528.0" width="2" height="64.0" fill="url(#gc)"/><rect x="626" y="528.0" width="3" height="64.0" fill="url(#gc)"/><rect x="629" y="528.0" width="1" height="64.0" fill="url(#gc)"/><rect x="630" y="528.0" width="3" height="64.0" fill="url(#gc)"/><rect x="633" y="528.0" width="3" height="64.0" fill="url(#gc)"/><rect x="636" y="528.0" width="2" height="64.0" fill="url(#gc)"/><rect x="638" y="528.0" width="1" height="64.0" fill="url(#gc)"/><rect x="639" y="528.0" width="1" height="64.0" fill="url(#gb)"/><rect x="640" y="528.0" width="1" height="64.0" fill="url(#gd)"/><rect x="641" y="528.0" width="2" height="64.0" fill="url(#gb)"/><rect x="643" y="528.0" width="1" height="64.0" fill="url(#gd)"/><rect x="644" y="528.0" width="2" height="64.0" fill="url(#gc)"/><rect x="646" y="528.0" width="1" height="64.0" fill="url(#gc)"/><rect x="647" y="528.0" width="3" height="64.0" fill="url(#gc)"/><rect x="650" y="528.0" width="3" height="64.0" fill="url(#gb)"/><rect x="653" y="528.0" width="1" height="64.0" fill="url(#gb)"/><rect x="714" y="466" width="41" height="8" fill="#fff6a0"/><rect x="714" y="466" width="1" height="8" fill="#1c0000"/><rect x="715" y="466" width="1" height="8" fill="#6a0400"/><rect x="716" y="466" width="2" height="8" fill="#ffffff"/><rect x="718" y="466" width="2" height="8" fill="#ffd200"/><rect x="724" y="466" width="2" height="8" fill="#ffffff"/><rect x="727" y="466" width="2" height="8" fill="#ffd200"/><rect x="729" y="466" width="1" height="8" fill="#6a0400"/><rect x="730" y="466" width="2" height="8" fill="#ff8a00"/><rect x="732" y="466" width="2" height="8" fill="#ff8a00"/><rect x="734" y="466" width="1" height="8" fill="#b01800"/><rect x="735" y="466" width="1" height="8" fill="#ffffff"/><rect x="736" y="466" width="2" height="8" fill="#6a0400"/><rect x="738" y="466" width="2" height="8" fill="#ffee50"/><rect x="742" y="466" width="1" height="8" fill="#1c0000"/><rect x="743" y="466" width="2" height="8" fill="#ff8a00"/><rect x="745" y="466" width="1" height="8" fill="#e04800"/><rect x="746" y="466" width="1" height="8" fill="#ffffff"/><rect x="749" y="466" width="1" height="8" fill="#ffee50"/><rect x="750" y="466" width="1" height="8" fill="#b01800"/><rect x="751" y="466" width="2" height="8" fill="#6a0400"/><rect x="753" y="466" width="2" height="8" fill="#ffffff"/><rect x="755" y="553.5" width="1" height="25.0" fill="url(#gb)"/><rect x="756" y="556.5" width="1" height="25.0" fill="url(#ga)"/><rect x="757" y="559.5" width="1" height="25.0" fill="url(#gb)"/><rect x="758" y="564.0" width="2" height="25.0" fill="url(#gc)"/><rect x="760" y="570.0" width="2" height="25.0" fill="url(#gb)"/><rect x="762" y="574.5" width="1" height="25.0" fill="url(#ga)"/><rect x="811" y="466.0" width="2" height="30.0" fill="url(#gc)"/><rect x="813" y="466.0" width="1" height="30.0" fill="url(#gc)"/><rect x="814" y="466.0" width="1" height="30.0" fill="url(#gd)"/><rect x="815" y="466.0" width="2" height="30.0" fill="url(#gb)"/><rect x="817" y="466.0" width="1" height="30.0" fill="url(#ga)"/><rect x="818" y="466.0" width="1" height="30.0" fill="url(#gd)"/><rect x="819" y="466.0" width="1" height="30.0" fill="url(#ga)"/><rect x="820" y="466.0" width="1" height="30.0" fill="url(#gd)"/><rect x="821" y="466.0" width="3" height="30.0" fill="url(#gc)"/><rect x="824" y="466.0" width="2" height="30.0" fill="url(#gd)"/><rect x="826" y="466.0" width="1" height="30.0" fill="url(#gb)"/><rect x="827" y="466.0" width="1" height="30.0" fill="url(#gd)"/><rect x="828" y="466.0" width="3" height="30.0" fill="url(#gd)"/><rect x="831" y="466.0" width="2" height="30.0" fill="url(#gd)"/><rect x="833" y="466.0" width="2" height="30.0" fill="url(#ga)"/><rect x="835" y="466.0" width="1" height="30.0" fill="url(#gd)"/><rect x="836" y="466.0" width="2" height="30.0" fill="url(#gb)"/><rect x="838" y="466.0" width="2" height="30.0" fill="url(#gb)"/><rect x="840" y="466.0" width="1" height="30.0" fill="url(#gb)"/><rect x="841" y="466.0" width="1" height="30.0" fill="url(#ga)"/><rect x="842" y="466.0" width="1" height="30.0" fill="url(#ga)"/><rect x="843" y="466.0" width="2" height="30.0" fill="url(#gd)"/><rect x="845" y="466.0" width="3" height="30.0" fill="url(#gc)"/><rect x="848" y="466.0" width="3" height="30.0" fill="url(#gb)"/><rect x="851" y="466.0" width="2" height="30.0" fill="url(#gd)"/><rect x="853" y="466.0" width="2" height="30.0" fill="url(#gc)"/><rect x="855" y="466.0" width="1" height="30.0" fill="url(#gb)"/><rect x="856" y="466.0" width="1" height="30.0" fill="url(#gc)"/><rect x="857" y="480.1" width="1" height="15.9" fill="url(#gd)"/><rect x="858" y="483.0" width="2" height="13.0" fill="url(#ga)"/><rect x="860" y="485.3" width="1" height="10.7" fill="url(#gd)"/><rect x="861" y="487.5" width="3" height="8.5" fill="url(#gb)"/><rect x="864" y="488.9" width="2" height="7.1" fill="url(#gc)"/><rect x="866" y="489.0" width="1" height="7.0" fill="url(#ga)"/><rect x="770" y="489" width="41" height="6" fill="#fff6a0"/><rect x="772" y="489" width="1" height="6" fill="#e04800"/><rect x="773" y="489" width="2" height="6" fill="#1c0000"/><rect x="775" y="489" width="1" height="6" fill="#ffd200"/><rect x="777" y="489" width="1" height="6" fill="#ffb000"/><rect x="778" y="489" width="2" height="6" fill="#ff8a00"/><rect x="780" y="489" width="1" height="6" fill="#6a0400"/><rect x="781" y="489" width="1" height="6" fill="#1c0000"/><rect x="783" y="489" width="1" height="6" fill="#ff8a00"/><rect x="784" y="489" width="2" height="6" fill="#e04800"/><rect x="786" y="489" width="1" height="6" fill="#e04800"/><rect x="788" y="489" width="2" height="6" fill="#ffffff"/><rect x="790" y="489" width="2" height="6" fill="#000"/><rect x="792" y="489" width="1" height="6" fill="#ffffff"/><rect x="802" y="489" width="1" height="6" fill="#ffffff"/><rect x="803" y="489" width="1" height="6" fill="#ffffff"/><rect x="805" y="489" width="1" height="6" fill="#ffd200"/><rect x="806" y="489" width="1" height="6" fill="#6a0400"/><rect x="807" y="489" width="1" height="6" fill="#ffffff"/><rect x="809" y="489" width="2" height="6" fill="#ffb000"/><rect x="857" y="489" width="40" height="6" fill="#fff6a0"/><rect x="860" y="489" width="1" height="6" fill="#1c0000"/><rect x="861" y="489" width="2" height="6" fill="#ffffff"/><rect x="863" y="489" width="1" height="6" fill="#ff8a00"/><rect x="869" y="489" width="2" height="6" fill="#ffffff"/><rect x="872" y="489" width="1" height="6" fill="#b01800"/><rect x="873" y="489" width="1" height="6" fill="#ffee50"/><rect x="874" y="489" width="1" height="6" fill="#ffb000"/><rect x="875" y="489" width="1" height="6" fill="#b01800"/><rect x="877" y="489" width="1" height="6" fill="#b01800"/><rect x="880" y="489" width="1" height="6" fill="#e04800"/><rect x="881" y="489" width="2" height="6" fill="#ffd200"/><rect x="883" y="489" width="2" height="6" fill="#e04800"/><rect x="889" y="489" width="1" height="6" fill="#ffb000"/><rect x="890" y="489" width="1" height="6" fill="#6a0400"/><rect x="891" y="489" width="1" height="6" fill="#ffb000"/><rect x="892" y="489" width="1" height="6" fill="#6a0400"/><rect x="893" y="489" width="1" height="6" fill="#b01800"/><rect x="894" y="489" width="1" height="6" fill="#6a0400"/><rect x="770" y="511" width="46" height="5.5" fill="#fff6a0"/><rect x="770" y="511" width="1" height="5.5" fill="#e04800"/><rect x="773" y="511" width="1" height="5.5" fill="#1c0000"/><rect x="774" y="511" width="1" height="5.5" fill="#ffffff"/><rect x="775" y="511" width="2" height="5.5" fill="#ffee50"/><rect x="777" y="511" width="1" height="5.5" fill="#ffd200"/><rect x="778" y="511" width="1" height="5.5" fill="#000"/><rect x="779" y="511" width="1" height="5.5" fill="#6a0400"/><rect x="782" y="511" width="1" height="5.5" fill="#ffee50"/><rect x="785" y="511" width="1" height="5.5" fill="#ffee50"/><rect x="788" y="511" width="2" height="5.5" fill="#1c0000"/><rect x="793" y="511" width="2" height="5.5" fill="#e04800"/><rect x="798" y="511" width="1" height="5.5" fill="#e04800"/><rect x="799" y="511" width="1" height="5.5" fill="#b01800"/><rect x="802" y="511" width="1" height="5.5" fill="#b01800"/><rect x="803" y="511" width="1" height="5.5" fill="#ffb000"/><rect x="806" y="511" width="2" height="5.5" fill="#ffffff"/><rect x="808" y="511" width="1" height="5.5" fill="#1c0000"/><rect x="810" y="511" width="1" height="5.5" fill="#ffd200"/><rect x="811" y="511" width="1" height="5.5" fill="#b01800"/><rect x="812" y="511" width="1" height="5.5" fill="#ffb000"/><rect x="815" y="511" width="1" height="5.5" fill="#000"/><rect x="815" y="511.0" width="3" height="7.8" fill="url(#ga)"/><rect x="818" y="511.0" width="2" height="10.6" fill="url(#gb)"/><rect x="820" y="511.0" width="3" height="13.5" fill="url(#gb)"/><rect x="823" y="511.0" width="2" height="16.4" fill="url(#ga)"/><rect x="825" y="511.0" width="3" height="19.3" fill="url(#gb)"/><rect x="828" y="511.0" width="3" height="18.7" fill="url(#ga)"/><rect x="831" y="511.0" width="1" height="15.6" fill="url(#ga)"/><rect x="832" y="511.0" width="1" height="14.0" fill="url(#gb)"/><rect x="833" y="511.0" width="2" height="11.7" fill="url(#ga)"/><rect x="835" y="511.0" width="2" height="8.6" fill="url(#gc)"/><rect x="837" y="511.0" width="2" height="5.5" fill="url(#gc)"/><rect x="839" y="511.0" width="1" height="3.2" fill="url(#gc)"/><rect x="840" y="511.0" width="1" height="1.6" fill="url(#ga)"/><rect x="769" y="517.5" width="3" height="84.6" fill="url(#gd)"/><rect x="772" y="519.7" width="1" height="80.1" fill="url(#gc)"/><rect x="773" y="520.8" width="1" height="77.8" fill="url(#gc)"/><rect x="774" y="522.9" width="3" height="73.2" fill="url(#gc)"/><rect x="777" y="525.6" width="2" height="67.5" fill="url(#gc)"/><rect x="779" y="527.3" width="1" height="64.0" fill="url(#gc)"/><rect x="780" y="528.9" width="2" height="60.6" fill="url(#gc)"/><rect x="782" y="531.6" width="3" height="54.9" fill="url(#gb)"/><rect x="785" y="534.3" width="2" height="49.1" fill="url(#gb)"/><rect x="787" y="537.0" width="3" height="43.4" fill="url(#gd)"/><rect x="790" y="539.7" width="2" height="37.7" fill="url(#gb)"/><rect x="792" y="541.9" width="2" height="33.1" fill="url(#gb)"/><rect x="794" y="543.5" width="1" height="29.6" fill="url(#gd)"/><rect x="795" y="544.6" width="1" height="27.4" fill="url(#ga)"/><rect x="796" y="546.7" width="3" height="22.8" fill="url(#gc)"/><rect x="799" y="548.9" width="1" height="18.2" fill="url(#gd)"/><rect x="800" y="550.0" width="1" height="15.9" fill="url(#ga)"/><rect x="801" y="551.6" width="2" height="12.5" fill="url(#gc)"/><rect x="803" y="553.8" width="2" height="7.9" fill="url(#gc)"/><rect x="805" y="556.5" width="3" height="2.1" fill="url(#gc)"/><rect x="858" y="557.2" width="1" height="4.4" fill="url(#gd)"/><rect x="859" y="555.3" width="2" height="7.8" fill="url(#gc)"/><rect x="861" y="553.5" width="1" height="11.1" fill="url(#ga)"/><rect x="862" y="552.3" width="1" height="13.4" fill="url(#gb)"/><rect x="863" y="551.0" width="1" height="15.6" fill="url(#ga)"/><rect x="864" y="549.2" width="2" height="19.0" fill="url(#gc)"/><rect x="866" y="547.4" width="1" height="22.4" fill="url(#ga)"/><rect x="867" y="546.1" width="1" height="24.6" fill="url(#gb)"/><rect x="868" y="544.9" width="1" height="26.9" fill="url(#gb)"/><rect x="869" y="543.1" width="2" height="30.2" fill="url(#gd)"/><rect x="871" y="540.0" width="3" height="35.9" fill="url(#gd)"/><rect x="874" y="537.6" width="1" height="40.4" fill="url(#gc)"/><rect x="875" y="536.3" width="1" height="42.6" fill="url(#gb)"/><rect x="876" y="533.9" width="3" height="47.1" fill="url(#gd)"/><rect x="879" y="530.8" width="2" height="52.8" fill="url(#gc)"/><rect x="881" y="528.4" width="2" height="57.2" fill="url(#ga)"/><rect x="883" y="526.5" width="1" height="60.6" fill="url(#gc)"/><rect x="884" y="524.1" width="3" height="65.1" fill="url(#ga)"/><rect x="887" y="521.6" width="1" height="69.6" fill="url(#gd)"/><rect x="888" y="520.4" width="1" height="71.9" fill="url(#gc)"/><rect x="889" y="518.6" width="2" height="75.2" fill="url(#gc)"/><rect x="891" y="516.7" width="1" height="78.6" fill="url(#gc)"/><rect x="892" y="514.9" width="2" height="82.0" fill="url(#gc)"/><rect x="894" y="513.1" width="1" height="85.4" fill="url(#gc)"/><rect x="895" y="511.8" width="1" height="87.6" fill="url(#gd)"/><rect x="896" y="510.0" width="2" height="91.0" fill="url(#gd)"/><rect x="918" y="466" width="46" height="8" fill="#fff6a0"/><rect x="918" y="466" width="1" height="8" fill="#000"/><rect x="919" y="466" width="1" height="8" fill="#e04800"/><rect x="920" y="466" width="2" height="8" fill="#e04800"/><rect x="923" y="466" width="1" height="8" fill="#ffb000"/><rect x="928" y="466" width="2" height="8" fill="#ffb000"/><rect x="930" y="466" width="2" height="8" fill="#ffb000"/><rect x="932" y="466" width="1" height="8" fill="#ffb000"/><rect x="935" y="466" width="1" height="8" fill="#ffd200"/><rect x="936" y="466" width="1" height="8" fill="#ffffff"/><rect x="937" y="466" width="1" height="8" fill="#e04800"/><rect x="938" y="466" width="1" height="8" fill="#ffee50"/><rect x="939" y="466" width="2" height="8" fill="#b01800"/><rect x="942" y="466" width="1" height="8" fill="#ffee50"/><rect x="943" y="466" width="2" height="8" fill="#ffd200"/><rect x="946" y="466" width="2" height="8" fill="#ffffff"/><rect x="948" y="466" width="1" height="8" fill="#6a0400"/><rect x="952" y="466" width="1" height="8" fill="#ffffff"/><rect x="953" y="466" width="1" height="8" fill="#1c0000"/><rect x="954" y="466" width="1" height="8" fill="#ffffff"/><rect x="957" y="466" width="1" height="8" fill="#e04800"/><rect x="959" y="466" width="1" height="8" fill="#6a0400"/><rect x="961" y="466" width="2" height="8" fill="#000"/><rect x="963" y="466" width="1" height="8" fill="#ffd200"/><rect x="964" y="551.5" width="1" height="25.0" fill="url(#gb)"/><rect x="965" y="554.4" width="1" height="25.0" fill="url(#gc)"/><rect x="966" y="557.2" width="1" height="25.0" fill="url(#gc)"/><rect x="967" y="561.6" width="2" height="25.0" fill="url(#ga)"/><rect x="969" y="567.4" width="2" height="25.0" fill="url(#gb)"/><rect x="971" y="573.2" width="2" height="25.0" fill="url(#gc)"/></g><g fill="#ffc040" stroke="#ffc040" stroke-width="1" stroke-opacity=".8" shape-rendering="geometricPrecision"><path d="M303 459L365 459L365 474L303 474Z" fill-rule="evenodd"/><path d="M322 452H357V595Q357 603 349 603H303V591L322 588Z" fill-rule="evenodd"/><path d="M303 508L365 497L365 516L303 527Z" fill-rule="evenodd"/><path d="M365 470H488V591Q488 603 476 603H365Z" fill-rule="evenodd"/><path d="M508 487H694Q690 507 664 507H508Z" fill-rule="evenodd"/><path d="M508 513H693V591Q693 603 681 603H508ZM547 528V590H654V528Z" fill-rule="evenodd"/><path d="M714 451H755V466H714Z" fill-rule="evenodd"/><path d="M714 474H755V603H729Q721 603 721 595V489H714Z" fill-rule="evenodd"/><path d="M755 574L762.500 597V603H755Z" fill-rule="evenodd"/><path d="M770 451H897V489H866Q857 488 857 479V466H811V489H770Z" fill-rule="evenodd"/><path d="M770 495H897V510L857 559L897 600V603H857L835.500 585L817 603H769L807 557L770 516.500H815L828 531L841 511H770Z" fill-rule="evenodd"/><path d="M918 451H964V466H918Z" fill-rule="evenodd"/><path d="M918 474H964V603H933Q925 603 925 595V489H918Z" fill-rule="evenodd"/><path d="M964 572L972.500 597V603H964Z" fill-rule="evenodd"/><path d="M972 474H1103V489H972Z" fill-rule="evenodd"/><path d="M1014 451H1061V603H1014Z" fill-rule="evenodd"/></g><g fill="#fff" shape-rendering="geometricPrecision"><path d="M303 459L365 459L365 474L303 474Z" fill-rule="evenodd"/><path d="M322 452H357V595Q357 603 349 603H303V591L322 588Z" fill-rule="evenodd"/><path d="M303 508L365 497L365 516L303 527Z" fill-rule="evenodd"/><path d="M365 470H488V591Q488 603 476 603H365Z" fill-rule="evenodd"/><path d="M508 487H694Q690 507 664 507H508Z" fill-rule="evenodd"/><path d="M508 513H693V591Q693 603 681 603H508ZM547 528V590H654V528Z" fill-rule="evenodd"/><path d="M714 451H755V466H714Z" fill-rule="evenodd"/><path d="M714 474H755V603H729Q721 603 721 595V489H714Z" fill-rule="evenodd"/><path d="M755 574L762.500 597V603H755Z" fill-rule="evenodd"/><path d="M770 451H897V489H866Q857 488 857 479V466H811V489H770Z" fill-rule="evenodd"/><path d="M770 495H897V510L857 559L897 600V603H857L835.500 585L817 603H769L807 557L770 516.500H815L828 531L841 511H770Z" fill-rule="evenodd"/><path d="M918 451H964V466H918Z" fill-rule="evenodd"/><path d="M918 474H964V603H933Q925 603 925 595V489H918Z" fill-rule="evenodd"/><path d="M964 572L972.500 597V603H964Z" fill-rule="evenodd"/><path d="M972 474H1103V489H972Z" fill-rule="evenodd"/><path d="M1014 451H1061V603H1014Z" fill-rule="evenodd"/></g><path d="M403 493H407L404.500 603H394Z M441.500 493H448V603H432Z" fill="#000" shape-rendering="geometricPrecision"/><path d="M407 493H411L406.500 603H404.500Z" fill="url(#gl)" opacity=".85" shape-rendering="geometricPrecision"/><path d="M403 493L394 603M441.500 493L432 603" stroke="#ffe060" stroke-width=".8" stroke-opacity=".6" fill="none" shape-rendering="geometricPrecision"/><path d="M448 493H450L449.500 603H448Z" fill="url(#gl)"/><rect x="365" y="484" width="2" height="119" fill="url(#gb)"/><rect x="367" y="484" width="3" height="119" fill="url(#gl)"/><rect x="370" y="484" width="3" height="119" fill="url(#gl)" opacity=".5"/></g></svg>
<div class="menu" style="left:367px;top:24px;width:275px;height:461px"><div class="mi" style="top:1px;left:0px;width:273px"><span class="l" style="left:21px;letter-spacing:.35px"><span class="cj">波纹</span></span><span class="r">Alt+Ctrl+F</span></div><div class="sep" style="left:2px;top:25px;width:269px"></div><div class="mi" style="top:31px;left:0px;width:273px"><span class="l" style="left:21px;letter-spacing:.35px"><span class="cj">转换为智能滤镜</span><span class="la">(S)</span></span></div><div class="sep" style="left:2px;top:55px;width:269px"></div><div class="mi" style="top:61px;left:0px;width:273px"><span class="l" style="left:21px;letter-spacing:.35px"><span class="cj">滤镜库</span><span class="la">(G)<b>...</b></span></span></div><div class="mi" style="top:82px;left:0px;width:273px"><span class="l" style="left:21px;letter-spacing:.35px"><span class="cj">自适应广角</span><span class="la">(A)<b>...</b></span></span><span class="r">Alt+Shift+Ctrl+A</span></div><div class="mi" style="top:103px;left:0px;width:273px"><span class="l" style="left:21px;letter-spacing:.35px"><span class="la" style="letter-spacing:.32px;word-spacing:-1px">Camera Raw </span><span class="cj">滤镜</span><span class="la">(C)<b>...</b></span></span><span class="r">Shift+Ctrl+A</span></div><div class="mi" style="top:124px;left:0px;width:273px"><span class="l" style="left:21px;letter-spacing:.35px"><span class="cj">镜头校正</span><span class="la">(R)<b>...</b></span></span><span class="r">Shift+Ctrl+R</span></div><div class="mi" style="top:145px;left:0px;width:273px"><span class="l" style="left:21px;letter-spacing:.35px"><span class="cj">液化</span><span class="la">(L)<b>...</b></span></span><span class="r">Shift+Ctrl+X</span></div><div class="mi" style="top:166px;left:0px;width:273px"><span class="l" style="left:21px;letter-spacing:.35px"><span class="cj">消失点</span><span class="la">(V)<b>...</b></span></span><span class="r">Alt+Ctrl+V</span></div><div class="sep" style="left:2px;top:190px;width:269px"></div><div class="mi" style="top:196px;left:0px;width:273px"><span class="l" style="left:21px;letter-spacing:.35px"><span class="la">3D</span></span><div class="arr" style="left:260px;top:6px"></div></div><div class="mi" style="top:217px;left:0px;width:273px"><span class="l" style="left:21px;letter-spacing:.35px"><span class="cj">风格化</span></span><div class="arr" style="left:260px;top:6px"></div></div><div class="mi" style="top:238px;left:0px;width:273px"><span class="l" style="left:21px;letter-spacing:.35px"><span class="cj">模糊</span></span><div class="arr" style="left:260px;top:6px"></div></div><div class="mi" style="top:259px;left:0px;width:273px"><span class="l" style="left:21px;letter-spacing:.35px"><span class="cj">模糊画廊</span></span><div class="arr" style="left:260px;top:6px"></div></div><div class="mi hl" style="top:280px;left:3px;width:267px"><span class="l" style="left:18px;letter-spacing:.35px"><span class="cj">扭曲</span></span><div class="arr" style="left:257px;top:6px"></div></div><div class="mi" style="top:301px;left:0px;width:273px"><span class="l" style="left:21px;letter-spacing:.35px"><span class="cj">锐化</span></span><div class="arr" style="left:260px;top:6px"></div></div><div class="mi" style="top:322px;left:0px;width:273px"><span class="l" style="left:21px;letter-spacing:.35px"><span class="cj">视频</span></span><div class="arr" style="left:260px;top:6px"></div></div><div class="mi" style="top:343px;left:0px;width:273px"><span class="l" style="left:21px;letter-spacing:.35px"><span class="cj">像素化</span></span><div class="arr" style="left:260px;top:6px"></div></div><div class="mi" style="top:364px;left:0px;width:273px"><span class="l" style="left:21px;letter-spacing:.35px"><span class="cj">渲染</span></span><div class="arr" style="left:260px;top:6px"></div></div><div class="mi" style="top:385px;left:0px;width:273px"><span class="l" style="left:21px;letter-spacing:.35px"><span class="cj">杂色</span></span><div class="arr" style="left:260px;top:6px"></div></div><div class="mi" style="top:406px;left:0px;width:273px"><span class="l" style="left:21px;letter-spacing:.35px"><span class="cj">其它</span></span><div class="arr" style="left:260px;top:6px"></div></div><div class="sep" style="left:2px;top:430px;width:269px"></div><div class="mi" style="top:436px;left:0px;width:273px"><span class="l" style="left:21px;letter-spacing:.35px"><span class="cj">浏览联机滤镜</span><span class="la"><b>...</b></span></span></div></div>
<div class="menu" style="left:637px;top:302px;width:96px;height:195px"><div class="mi" style="top:2px;left:2px;width:90px"><span class="l" style="left:19px;letter-spacing:.35px"><span class="cj">波浪</span><span class="la"><b>...</b></span></span></div><div class="mi hl" style="top:23px;left:2px;width:90px"><span class="l" style="left:19px;letter-spacing:.35px"><span class="cj">波纹</span><span class="la"><b>...</b></span></span></div><div class="mi" style="top:44px;left:2px;width:90px"><span class="l" style="left:19px;letter-spacing:.35px"><span class="cj">极坐标</span><span class="la"><b>...</b></span></span></div><div class="mi" style="top:65px;left:2px;width:90px"><span class="l" style="left:19px;letter-spacing:.35px"><span class="cj">挤压</span><span class="la"><b>...</b></span></span></div><div class="mi" style="top:86px;left:2px;width:90px"><span class="l" style="left:19px;letter-spacing:.35px"><span class="cj">切变</span><span class="la"><b>...</b></span></span></div><div class="mi" style="top:107px;left:2px;width:90px"><span class="l" style="left:19px;letter-spacing:.35px"><span class="cj">球面化</span><span class="la"><b>...</b></span></span></div><div class="mi" style="top:128px;left:2px;width:90px"><span class="l" style="left:19px;letter-spacing:.35px"><span class="cj">水波</span><span class="la"><b>...</b></span></span></div><div class="mi" style="top:149px;left:2px;width:90px"><span class="l" style="left:19px;letter-spacing:.35px"><span class="cj">旋转扭曲</span><span class="la"><b>...</b></span></span></div><div class="mi" style="top:170px;left:2px;width:90px"><span class="l" style="left:19px;letter-spacing:.35px"><span class="cj">置换</span><span class="la"><b>...</b></span></span></div></div>
<svg class="abs" width="1227" height="940" viewBox="0 0 1227 940"><path d="M51.6 473.9L108.0 393.6L168.7 306.9L248.6 192.3L301.6 116.2L341.7 57.8L363.2 26.2L364.0 28.7L364.9 10.5L353.2 21.0L355.7 21.1L334.0 52.4L294.0 111.0L242.0 187.8L164.0 303.6L105.0 391.5L50.4 473.1ZM165.0 535.0L226.6 471.5L287.9 407.7L338.7 354.2L369.0 321.9L370.4 325.0L375.8 310.3L360.5 316.4L364.0 317.3L333.6 349.4L283.4 403.4L223.6 468.6L164.0 534.0ZM945.2 431.0L878.0 401.5L810.6 372.2L754.4 347.9L720.6 333.6L723.7 330.9L706.1 332.5L719.1 345.5L717.6 340.8L751.5 354.9L808.3 377.7L876.5 405.0L944.8 432.0Z" fill="#f03c3e"/></svg>
<div class="t" style="left:885.5px;top:889.5px;font-size:37px;line-height:42px;color:#e6e6e6;filter:drop-shadow(1px 1px 0.6px rgba(0,0,0,.7))"><span class="cj" style="letter-spacing:-1.6px">头条号</span></div>
<div class="t" style="left:1027px;top:889.5px;font-size:37px;line-height:42px;color:#e6e6e6;filter:drop-shadow(1px 1px 0.6px rgba(0,0,0,.7))"><span class="cj" style="letter-spacing:-1.6px">扬名爱设计</span></div>
<svg class="abs" width="1227" height="940" viewBox="0 0 1227 940" style="filter:drop-shadow(1px 1px 0.6px rgba(0,0,0,.7))"><path d="M1003.500 925L1015.500 893" stroke="#e6e6e6" stroke-width="2.800" fill="none"/></svg>
</body></html>
